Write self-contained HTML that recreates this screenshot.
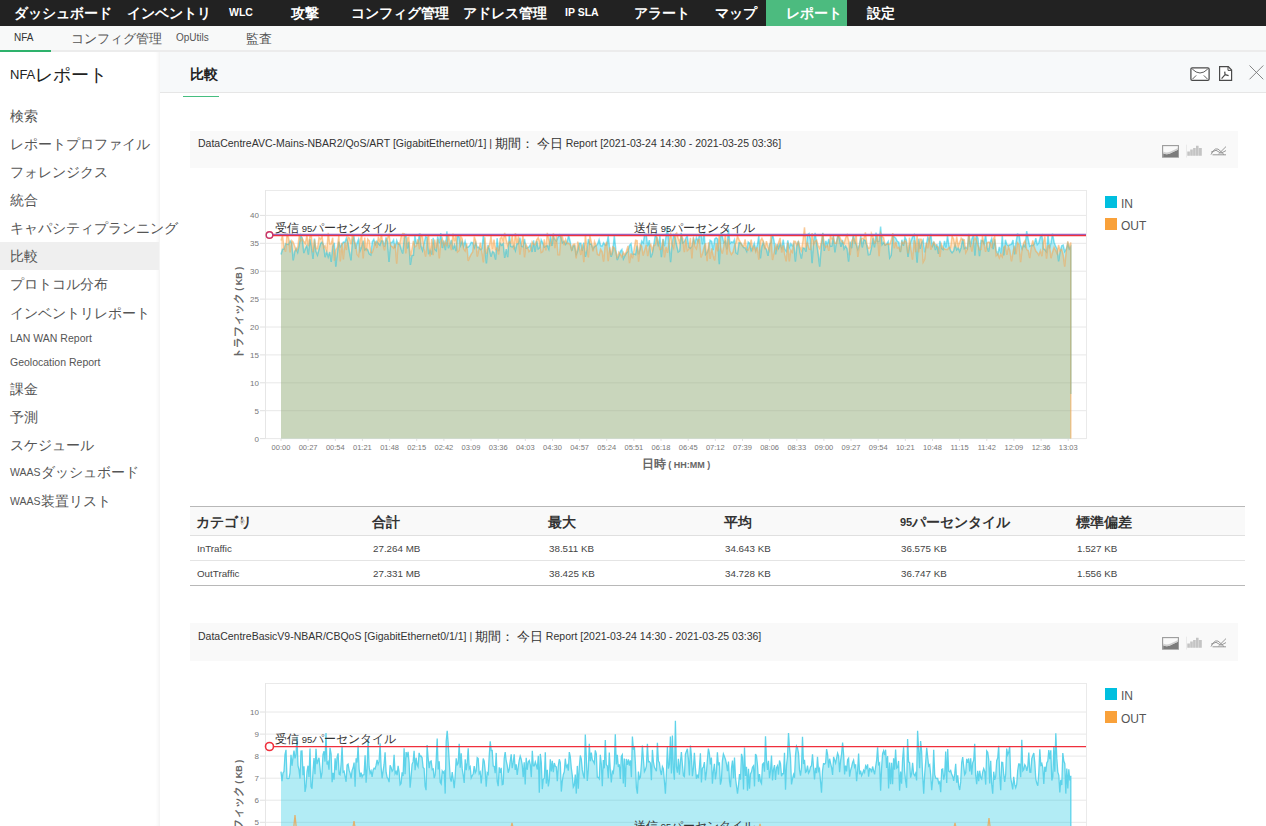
<!DOCTYPE html>
<html lang="ja">
<head>
<meta charset="utf-8">
<style>
*{box-sizing:border-box;margin:0;padding:0}
html,body{width:1266px;height:826px;overflow:hidden;background:#fff;font-family:"Liberation Sans",sans-serif;color:#333}
.abs{position:absolute}
svg text{font-family:"Liberation Sans",sans-serif}
.j{line-height:0;position:relative;top:1px}
.pct .j{font-size:11.6px}
.xt .j{font-size:12px}
.yt .j{font-size:11.2px}
#top{left:0;top:0;width:1266px;height:26px;background:#222}
#top .it{position:absolute;top:-1px;height:26px;line-height:26px;color:#fff;font-size:10.5px;font-weight:bold;white-space:nowrap}
#top .j{font-size:14.1px;top:2px}
#top .act{background:#4cbb7f;top:0;line-height:24px}
#sub{left:0;top:26px;width:1266px;height:26px;background:#f8f9f9;border-bottom:2px solid #ececec}
#sub .it{position:absolute;top:0;height:24px;line-height:24px;font-size:10px;color:#555;white-space:nowrap}
#sub .j{font-size:12.8px;top:2px}
#side{left:0;top:52px;width:160px;height:774px;background:#fff;box-shadow:inset -4px 0 4px -3px #eee}
#side .ttl{position:absolute;left:10px;top:13px;line-height:20px;font-size:13px;color:#222;white-space:nowrap}
#side .ttl .j{font-size:17.9px;top:2px}
#side .it{position:absolute;left:0;width:159px;height:28px;line-height:28px;padding-left:10px;font-size:10.5px;color:#555;white-space:nowrap}
#side .it .j{font-size:14px}
#side .sel{background:#efefef}
#chead{left:160px;top:52px;width:1106px;height:41px;background:#f7f9fa;border-bottom:1px solid #e6e6e6}
#chead .j{font-size:14px}
.ptitle{position:absolute;left:190px;width:1048px;height:37px;background:#f9f9f9;font-size:10.5px;color:#333;white-space:nowrap;padding-left:8px;line-height:20px;padding-top:2px}
.ptitle .j{font-size:13.3px}
.legend{position:absolute;font-size:12px;color:#555}
.legend .sq{position:absolute;left:0;width:12px;height:12px}
.legend .lb{position:absolute;left:16px;white-space:nowrap;line-height:12px}
table.dt{position:absolute;left:190px;top:506px;width:1055px;border-collapse:collapse;table-layout:fixed}
.dt th{height:29px;line-height:14px;text-align:left;font-size:11px;font-weight:bold;color:#333;background:#f9f9f9;padding-left:6px;padding-top:2px;border-top:1px solid #b8b8b8;border-bottom:1px solid #e0e0e0;white-space:nowrap}
.dt th .j{font-size:13.7px}
.dt td{height:25px;line-height:14px;font-size:9.8px;color:#444;padding-left:7px;padding-top:2px;border-bottom:1px solid #e4e4e4;white-space:nowrap}
.dt tr:last-child td{border-bottom:1px solid #b8b8b8}
</style>
</head>
<body>
<div id="top" class="abs">
  <div class="it" style="left:14px"><span class="j">ダッシュボード</span></div>
  <div class="it" style="left:127px"><span class="j">インベントリ</span></div>
  <div class="it" style="left:229px">WLC</div>
  <div class="it" style="left:291px"><span class="j">攻撃</span></div>
  <div class="it" style="left:351px"><span class="j">コンフィグ管理</span></div>
  <div class="it" style="left:463px"><span class="j">アドレス管理</span></div>
  <div class="it" style="left:565px">IP SLA</div>
  <div class="it" style="left:634px"><span class="j">アラート</span></div>
  <div class="it" style="left:715px"><span class="j">マップ</span></div>
  <div class="it act" style="left:766px;width:81px;padding-left:20px"><span class="j">レポート</span></div>
  <div class="it" style="left:867px"><span class="j">設定</span></div>
</div>
<div id="sub" class="abs">
  <div class="it" style="left:14px;color:#333">NFA</div>
  <div style="position:absolute;left:0;top:24px;width:51px;height:2px;background:#2eb26c"></div>
  <div class="it" style="left:71px"><span class="j">コンフィグ管理</span></div>
  <div class="it" style="left:176px">OpUtils</div>
  <div class="it" style="left:246px"><span class="j">監査</span></div>
</div>
<div id="side" class="abs">
  <div class="ttl">NFA<span class="j">レポート</span></div>
  <div class="it" style="top:50px"><span class="j">検索</span></div>
  <div class="it" style="top:78px"><span class="j">レポートプロファイル</span></div>
  <div class="it" style="top:106px"><span class="j">フォレンジクス</span></div>
  <div class="it" style="top:134px"><span class="j">統合</span></div>
  <div class="it" style="top:162px"><span class="j">キャパシティプランニング</span></div>
  <div class="it sel" style="top:190px"><span class="j">比較</span></div>
  <div class="it" style="top:218px"><span class="j">プロトコル分布</span></div>
  <div class="it" style="top:247px"><span class="j">インベントリレポート</span></div>
  <div class="it" style="top:272px">LAN WAN Report</div>
  <div class="it" style="top:296px">Geolocation Report</div>
  <div class="it" style="top:323px"><span class="j">課金</span></div>
  <div class="it" style="top:351px"><span class="j">予測</span></div>
  <div class="it" style="top:379px"><span class="j">スケジュール</span></div>
  <div class="it" style="top:406px">WAAS<span class="j">ダッシュボード</span></div>
  <div class="it" style="top:435px">WAAS<span class="j">装置リスト</span></div>
</div>
<div id="chead" class="abs">
  <div style="position:absolute;left:30px;top:12px;line-height:20px;font-size:12px;font-weight:bold;color:#222"><span class="j">比較</span></div>
</div>
<div class="abs" style="left:183px;top:96px;width:36px;height:1px;background:#46be80"></div>
<!-- header icons -->
<svg class="abs" style="left:1185px;top:60px" width="81" height="26" viewBox="1185 60 81 26">
  <rect x="1190.9" y="67.8" width="18.2" height="12.6" rx="1.3" fill="#fff" stroke="#4a4a4a" stroke-width="1.25"/>
  <path d="M1192.2 69 Q1200 77 1207.8 69" fill="none" stroke="#4a4a4a" stroke-width="0.9"/>
  <path d="M1192.4 79.2 L1196.2 75.4 M1207.6 79.2 L1203.8 75.4" fill="none" stroke="#4a4a4a" stroke-width="0.9"/>
  <path d="M1219.6 66.6 L1228.3 66.6 L1231.6 70.1 L1231.6 80.4 L1219.6 80.4 Z" fill="#fff" stroke="#4a4a4a" stroke-width="1.2"/>
  <path d="M1228 66.6 L1228 70.4 L1231.6 70.4" fill="none" stroke="#4a4a4a" stroke-width="1"/>
  <path d="M1221.6 78.6 L1225.1 74.6 L1224.7 71.6 M1225.1 74.6 L1228.6 75.6" fill="none" stroke="#4a4a4a" stroke-width="1.2"/>
  <path d="M1249.5 65.5 L1263.3 79.3 M1263.3 65.5 L1249.5 79.3" fill="none" stroke="#777" stroke-width="0.9"/>
</svg>

<!-- panel 1 -->
<div class="ptitle" style="top:131px">DataCentreAVC-Mains-NBAR2/QoS/ART [GigabitEthernet0/1] | <span class="j">期間：</span> <span class="j">今日</span> Report [2021-03-24 14:30 - 2021-03-25 03:36]</div>
<svg class="abs" style="left:1160px;top:143px" width="70" height="17" viewBox="1160 143 70 17">
  <rect x="1162.6" y="145.6" width="15.8" height="11.6" fill="#fafafa" stroke="#9a9a9a" stroke-width="1.1"/>
  <path d="M1163.2 156.9 L1163.2 153.2 Q1166.5 155 1170 153.4 Q1174 151.5 1178 149.8 L1178 156.9 Z" fill="#7c7c7c"/>
  <path d="M1163.2 151.6 Q1166.5 153.4 1170 151.8 Q1174 150 1178 148 L1178 149.8 Q1174 151.5 1170 153.4 Q1166.5 155 1163.2 153.2 Z" fill="#cfcfcf"/>
  <line x1="1186.5" y1="144.7" x2="1186.5" y2="157.5" stroke="#e6e6e6" stroke-width="0.8"/>
  <path d="M1187.3 155.8 V151.4 H1189.9 V155.8 Z M1190.2 155.8 V149.4 H1192.8 V155.8 Z M1193.1 155.8 V147.9 H1195.7 V155.8 Z M1196 155.8 V145.8 H1198.6 V155.8 Z M1198.9 155.8 V147.9 H1201.8 V155.8 Z" fill="#c4c4c4"/>
  <path d="M1211 154.6 Q1215.5 145 1220.5 151.2 L1224 154.6 M1218.5 154 L1226 146.6 M1211 152.2 L1216 150.3 L1221 153.2 L1226 150.6 M1212.5 154.8 L1226 154.8" fill="none" stroke="#8c8c8c" stroke-width="0.9"/>
</svg>
<svg width="1266" height="330" viewBox="0 170 1266 330" style="position:absolute;left:0;top:170px">
<line x1="265" y1="438.6" x2="1086" y2="438.6" stroke="#e8e8e8" stroke-width="1"/>
<line x1="260" y1="438.6" x2="265" y2="438.6" stroke="#e0e0e0" stroke-width="1"/>
<text x="259" y="441.6" text-anchor="end" font-size="8" fill="#777">0</text>
<line x1="265" y1="410.7" x2="1086" y2="410.7" stroke="#e8e8e8" stroke-width="1"/>
<line x1="260" y1="410.7" x2="265" y2="410.7" stroke="#e0e0e0" stroke-width="1"/>
<text x="259" y="413.7" text-anchor="end" font-size="8" fill="#777">5</text>
<line x1="265" y1="382.8" x2="1086" y2="382.8" stroke="#e8e8e8" stroke-width="1"/>
<line x1="260" y1="382.8" x2="265" y2="382.8" stroke="#e0e0e0" stroke-width="1"/>
<text x="259" y="385.8" text-anchor="end" font-size="8" fill="#777">10</text>
<line x1="265" y1="354.9" x2="1086" y2="354.9" stroke="#e8e8e8" stroke-width="1"/>
<line x1="260" y1="354.9" x2="265" y2="354.9" stroke="#e0e0e0" stroke-width="1"/>
<text x="259" y="357.9" text-anchor="end" font-size="8" fill="#777">15</text>
<line x1="265" y1="327.0" x2="1086" y2="327.0" stroke="#e8e8e8" stroke-width="1"/>
<line x1="260" y1="327.0" x2="265" y2="327.0" stroke="#e0e0e0" stroke-width="1"/>
<text x="259" y="330.0" text-anchor="end" font-size="8" fill="#777">20</text>
<line x1="265" y1="299.1" x2="1086" y2="299.1" stroke="#e8e8e8" stroke-width="1"/>
<line x1="260" y1="299.1" x2="265" y2="299.1" stroke="#e0e0e0" stroke-width="1"/>
<text x="259" y="302.1" text-anchor="end" font-size="8" fill="#777">25</text>
<line x1="265" y1="271.2" x2="1086" y2="271.2" stroke="#e8e8e8" stroke-width="1"/>
<line x1="260" y1="271.2" x2="265" y2="271.2" stroke="#e0e0e0" stroke-width="1"/>
<text x="259" y="274.2" text-anchor="end" font-size="8" fill="#777">30</text>
<line x1="265" y1="243.3" x2="1086" y2="243.3" stroke="#e8e8e8" stroke-width="1"/>
<line x1="260" y1="243.3" x2="265" y2="243.3" stroke="#e0e0e0" stroke-width="1"/>
<text x="259" y="246.3" text-anchor="end" font-size="8" fill="#777">35</text>
<line x1="265" y1="215.4" x2="1086" y2="215.4" stroke="#e8e8e8" stroke-width="1"/>
<line x1="260" y1="215.4" x2="265" y2="215.4" stroke="#e0e0e0" stroke-width="1"/>
<text x="259" y="218.4" text-anchor="end" font-size="8" fill="#777">40</text>
<line x1="265" y1="190.5" x2="1086" y2="190.5" stroke="#eaeaea"/>
<line x1="265.5" y1="190" x2="265.5" y2="439" stroke="#e6e6e6"/>
<line x1="1086.5" y1="190" x2="1086.5" y2="439" stroke="#eaeaea"/>
<polygon points="281.0,438.6 281.0,254.5 282.5,249.2 284.0,249.1 285.6,243.7 287.1,244.3 288.6,244.5 290.1,240.8 291.7,243.0 293.2,260.4 294.7,251.7 296.2,248.4 297.7,252.3 299.3,244.5 300.8,235.3 302.3,238.6 303.8,253.1 305.3,248.7 306.9,245.6 308.4,254.6 309.9,239.1 311.4,246.7 313.0,258.9 314.5,238.5 316.0,251.6 317.5,255.1 319.0,249.2 320.6,243.6 322.1,242.1 323.6,245.3 325.1,257.2 326.7,251.7 328.2,256.8 329.7,252.0 331.2,262.0 332.7,246.5 334.3,242.9 335.8,266.7 337.3,253.4 338.8,241.7 340.3,246.8 341.9,244.5 343.4,242.1 344.9,242.2 346.4,238.0 348.0,242.8 349.5,252.5 351.0,260.4 352.5,240.0 354.0,236.6 355.6,248.9 357.1,242.8 358.6,239.1 360.1,250.8 361.7,246.8 363.2,240.7 364.7,249.8 366.2,248.5 367.7,249.7 369.3,254.0 370.8,254.9 372.3,241.7 373.8,239.3 375.3,244.4 376.9,241.2 378.4,243.5 379.9,245.2 381.4,240.7 383.0,241.2 384.5,246.7 386.0,237.4 387.5,241.7 389.0,261.9 390.6,242.5 392.1,242.4 393.6,239.8 395.1,248.2 396.7,240.3 398.2,244.2 399.7,244.2 401.2,249.3 402.7,253.6 404.3,238.3 405.8,233.9 407.3,248.5 408.8,241.7 410.4,265.0 411.9,255.4 413.4,255.3 414.9,235.8 416.4,243.3 418.0,243.2 419.5,233.3 421.0,246.0 422.5,250.5 424.0,243.7 425.6,236.8 427.1,237.4 428.6,254.2 430.1,250.0 431.7,254.5 433.2,237.8 434.7,249.2 436.2,250.8 437.7,236.3 439.3,243.1 440.8,233.2 442.3,248.0 443.8,240.5 445.4,250.1 446.9,231.3 448.4,248.3 449.9,244.4 451.4,239.9 453.0,249.5 454.5,245.0 456.0,251.1 457.5,236.0 459.0,236.6 460.6,245.4 462.1,241.1 463.6,246.3 465.1,241.2 466.7,247.6 468.2,247.0 469.7,245.5 471.2,242.3 472.7,242.7 474.3,247.6 475.8,242.7 477.3,247.5 478.8,247.2 480.4,249.5 481.9,248.7 483.4,234.5 484.9,248.1 486.4,263.5 488.0,244.9 489.5,249.4 491.0,256.7 492.5,251.5 494.0,252.7 495.6,259.6 497.1,238.2 498.6,251.1 500.1,243.2 501.7,245.3 503.2,243.5 504.7,258.0 506.2,249.1 507.7,257.2 509.3,234.2 510.8,246.5 512.3,247.0 513.8,245.2 515.4,250.5 516.9,243.9 518.4,243.6 519.9,237.6 521.4,246.1 523.0,246.8 524.5,238.9 526.0,248.1 527.5,247.9 529.0,247.0 530.6,244.3 532.1,252.0 533.6,240.3 535.1,251.9 536.7,240.8 538.2,248.8 539.7,247.5 541.2,239.7 542.7,242.7 544.3,247.1 545.8,246.2 547.3,245.5 548.8,249.1 550.4,235.9 551.9,245.9 553.4,236.5 554.9,239.6 556.4,241.2 558.0,237.2 559.5,234.9 561.0,237.6 562.5,242.6 564.0,241.2 565.6,244.4 567.1,242.0 568.6,235.5 570.1,241.2 571.7,250.7 573.2,246.0 574.7,245.7 576.2,254.4 577.7,250.7 579.3,243.3 580.8,243.2 582.3,250.9 583.8,242.6 585.4,256.9 586.9,250.1 588.4,239.0 589.9,244.4 591.4,244.1 593.0,248.9 594.5,246.5 596.0,245.8 597.5,244.3 599.1,239.6 600.6,245.8 602.1,245.9 603.6,242.8 605.1,244.9 606.7,244.7 608.2,236.0 609.7,248.9 611.2,256.9 612.7,251.7 614.3,235.9 615.8,249.4 617.3,260.1 618.8,256.1 620.4,251.2 621.9,249.5 623.4,258.8 624.9,255.6 626.4,253.1 628.0,251.4 629.5,245.4 631.0,243.7 632.5,253.9 634.1,253.9 635.6,254.6 637.1,245.5 638.6,254.4 640.1,249.1 641.7,241.0 643.2,243.0 644.7,234.3 646.2,234.3 647.7,246.3 649.3,240.1 650.8,257.5 652.3,253.9 653.8,244.6 655.4,234.6 656.9,238.0 658.4,246.4 659.9,236.0 661.4,257.3 663.0,238.8 664.5,246.2 666.0,236.5 667.5,227.2 669.1,244.7 670.6,262.1 672.1,243.7 673.6,235.3 675.1,237.8 676.7,245.6 678.2,252.0 679.7,250.9 681.2,232.8 682.7,242.7 684.3,241.8 685.8,238.2 687.3,236.0 688.8,247.1 690.4,248.3 691.9,246.4 693.4,238.4 694.9,242.9 696.4,237.6 698.0,241.4 699.5,234.6 701.0,233.9 702.5,244.3 704.1,232.3 705.6,254.4 707.1,252.6 708.6,248.4 710.1,240.3 711.7,241.4 713.2,250.2 714.7,239.1 716.2,237.8 717.7,239.1 719.3,264.2 720.8,234.0 722.3,236.2 723.8,242.7 725.4,241.0 726.9,249.4 728.4,228.9 729.9,243.7 731.4,241.9 733.0,242.5 734.5,239.6 736.0,252.9 737.5,254.0 739.1,242.7 740.6,243.0 742.1,244.9 743.6,247.5 745.1,247.9 746.7,251.2 748.2,241.9 749.7,243.3 751.2,250.6 752.7,247.6 754.3,243.2 755.8,249.9 757.3,245.1 758.8,235.8 760.4,258.4 761.9,246.2 763.4,242.4 764.9,247.6 766.4,249.3 768.0,255.8 769.5,244.3 771.0,242.5 772.5,234.1 774.1,241.2 775.6,254.4 777.1,244.0 778.6,248.2 780.1,243.7 781.7,247.8 783.2,239.7 784.7,249.0 786.2,251.3 787.8,240.4 789.3,247.6 790.8,243.6 792.3,246.0 793.8,243.9 795.4,261.7 796.9,245.4 798.4,241.1 799.9,252.1 801.4,258.7 803.0,247.9 804.5,248.3 806.0,251.7 807.5,234.6 809.1,233.5 810.6,239.6 812.1,263.1 813.6,241.6 815.1,232.9 816.7,243.6 818.2,254.2 819.7,266.7 821.2,247.7 822.8,232.8 824.3,251.0 825.8,240.8 827.3,245.0 828.8,239.0 830.4,246.4 831.9,246.1 833.4,235.3 834.9,252.5 836.4,242.4 838.0,234.4 839.5,239.4 841.0,246.8 842.5,239.8 844.1,248.9 845.6,246.0 847.1,248.8 848.6,261.7 850.1,241.6 851.7,248.2 853.2,234.2 854.7,240.7 856.2,244.6 857.8,249.3 859.3,244.7 860.8,236.0 862.3,247.5 863.8,239.7 865.4,240.6 866.9,245.9 868.4,254.9 869.9,254.5 871.4,248.0 873.0,238.1 874.5,247.3 876.0,232.7 877.5,241.6 879.1,241.6 880.6,226.5 882.1,244.6 883.6,242.4 885.1,245.1 886.7,244.0 888.2,241.6 889.7,257.8 891.2,255.3 892.8,236.0 894.3,236.9 895.8,238.2 897.3,241.3 898.8,242.3 900.4,252.2 901.9,239.8 903.4,245.9 904.9,237.1 906.4,239.9 908.0,257.0 909.5,245.4 911.0,241.0 912.5,236.9 914.1,234.6 915.6,243.8 917.1,262.6 918.6,238.7 920.1,248.7 921.7,242.6 923.2,240.1 924.7,252.4 926.2,245.2 927.8,237.1 929.3,240.7 930.8,233.8 932.3,247.2 933.8,241.6 935.4,250.1 936.9,244.1 938.4,253.8 939.9,240.8 941.4,248.1 943.0,249.6 944.5,240.8 946.0,247.5 947.5,235.9 949.1,246.1 950.6,250.7 952.1,252.7 953.6,250.9 955.1,244.4 956.7,249.8 958.2,247.9 959.7,251.6 961.2,247.2 962.8,238.6 964.3,248.5 965.8,247.3 967.3,248.6 968.8,234.0 970.4,247.0 971.9,238.8 973.4,235.3 974.9,255.8 976.5,235.1 978.0,238.5 979.5,256.3 981.0,240.4 982.5,240.6 984.1,243.6 985.6,234.4 987.1,247.2 988.6,251.7 990.1,242.5 991.7,238.5 993.2,249.2 994.7,239.3 996.2,250.8 997.8,254.0 999.3,246.9 1000.8,253.7 1002.3,235.6 1003.8,255.5 1005.4,239.8 1006.9,244.6 1008.4,245.9 1009.9,244.8 1011.5,244.3 1013.0,240.1 1014.5,254.4 1016.0,242.3 1017.5,234.1 1019.1,234.8 1020.6,244.8 1022.1,248.8 1023.6,244.8 1025.1,246.8 1026.7,231.1 1028.2,239.1 1029.7,246.3 1031.2,245.3 1032.8,245.6 1034.3,243.9 1035.8,238.2 1037.3,244.6 1038.8,243.0 1040.4,236.7 1041.9,235.1 1043.4,248.7 1044.9,249.7 1046.5,251.8 1048.0,234.5 1049.5,248.4 1051.0,242.9 1052.5,233.7 1054.1,242.2 1055.6,246.2 1057.1,248.9 1058.6,261.3 1060.1,251.7 1061.7,245.8 1063.2,245.0 1064.7,251.6 1066.2,249.1 1067.8,243.6 1069.3,248.8 1070.8,246.7 1070.8,438.6" fill="rgba(0,191,223,0.3)"/>
<polygon points="281.0,438.6 281.0,240.5 282.5,235.4 284.0,247.9 285.6,251.7 287.1,233.4 288.6,238.2 290.1,252.5 291.7,240.6 293.2,242.2 294.7,246.3 296.2,250.5 297.7,247.8 299.3,235.1 300.8,240.9 302.3,238.4 303.8,241.5 305.3,243.5 306.9,235.6 308.4,246.1 309.9,236.6 311.4,236.6 313.0,252.4 314.5,239.5 316.0,248.5 317.5,248.6 319.0,237.5 320.6,239.0 322.1,236.5 323.6,247.7 325.1,245.6 326.7,251.5 328.2,232.8 329.7,243.9 331.2,243.7 332.7,237.7 334.3,260.7 335.8,249.8 337.3,247.5 338.8,235.8 340.3,261.5 341.9,242.8 343.4,259.4 344.9,242.4 346.4,250.0 348.0,237.2 349.5,238.1 351.0,244.2 352.5,234.0 354.0,241.3 355.6,244.1 357.1,254.5 358.6,256.4 360.1,240.5 361.7,235.2 363.2,258.5 364.7,237.6 366.2,251.2 367.7,239.0 369.3,240.8 370.8,252.4 372.3,252.7 373.8,247.5 375.3,241.0 376.9,248.0 378.4,236.6 379.9,242.4 381.4,234.1 383.0,244.7 384.5,250.4 386.0,240.4 387.5,238.2 389.0,234.5 390.6,245.5 392.1,246.6 393.6,248.1 395.1,243.7 396.7,263.6 398.2,242.8 399.7,243.6 401.2,236.3 402.7,233.6 404.3,233.7 405.8,253.4 407.3,238.0 408.8,237.3 410.4,256.1 411.9,249.5 413.4,240.9 414.9,246.9 416.4,245.9 418.0,239.3 419.5,249.1 421.0,234.9 422.5,237.1 424.0,248.7 425.6,256.7 427.1,241.3 428.6,234.2 430.1,256.5 431.7,239.1 433.2,255.2 434.7,239.5 436.2,248.4 437.7,239.0 439.3,258.5 440.8,241.5 442.3,238.5 443.8,246.0 445.4,241.5 446.9,246.3 448.4,234.4 449.9,243.4 451.4,250.1 453.0,233.6 454.5,241.3 456.0,236.0 457.5,252.0 459.0,250.6 460.6,236.4 462.1,238.3 463.6,248.7 465.1,250.9 466.7,243.5 468.2,260.9 469.7,257.1 471.2,254.1 472.7,252.0 474.3,236.7 475.8,241.2 477.3,256.6 478.8,249.7 480.4,242.7 481.9,252.0 483.4,262.4 484.9,237.3 486.4,253.8 488.0,247.3 489.5,245.4 491.0,236.1 492.5,249.2 494.0,239.6 495.6,249.3 497.1,248.0 498.6,254.5 500.1,238.7 501.7,237.0 503.2,240.8 504.7,233.0 506.2,239.7 507.7,245.6 509.3,241.7 510.8,242.8 512.3,235.3 513.8,249.5 515.4,233.1 516.9,243.1 518.4,236.3 519.9,254.7 521.4,244.2 523.0,235.5 524.5,257.3 526.0,244.5 527.5,247.2 529.0,251.6 530.6,250.0 532.1,241.9 533.6,244.1 535.1,244.8 536.7,239.8 538.2,237.6 539.7,241.8 541.2,252.4 542.7,251.5 544.3,239.4 545.8,250.4 547.3,232.8 548.8,239.8 550.4,246.2 551.9,239.1 553.4,233.4 554.9,248.1 556.4,236.2 558.0,254.7 559.5,254.7 561.0,236.0 562.5,236.9 564.0,245.2 565.6,239.4 567.1,243.5 568.6,243.3 570.1,244.5 571.7,249.8 573.2,244.4 574.7,244.0 576.2,258.5 577.7,241.6 579.3,247.3 580.8,255.0 582.3,244.4 583.8,262.1 585.4,234.9 586.9,248.5 588.4,257.4 589.9,235.8 591.4,242.3 593.0,251.4 594.5,241.6 596.0,245.3 597.5,254.5 599.1,255.2 600.6,249.2 602.1,251.5 603.6,261.7 605.1,245.6 606.7,241.9 608.2,261.1 609.7,247.4 611.2,255.4 612.7,246.8 614.3,247.9 615.8,251.9 617.3,258.4 618.8,252.2 620.4,254.3 621.9,256.9 623.4,252.3 624.9,255.0 626.4,251.2 628.0,245.9 629.5,263.2 631.0,253.4 632.5,258.4 634.1,249.5 635.6,240.3 637.1,240.7 638.6,261.7 640.1,244.5 641.7,246.3 643.2,255.6 644.7,249.9 646.2,244.8 647.7,256.1 649.3,246.9 650.8,244.4 652.3,250.4 653.8,245.2 655.4,244.9 656.9,236.6 658.4,243.0 659.9,249.5 661.4,248.9 663.0,239.4 664.5,257.5 666.0,246.8 667.5,252.8 669.1,242.0 670.6,232.7 672.1,244.2 673.6,247.8 675.1,234.6 676.7,233.0 678.2,238.4 679.7,242.3 681.2,235.4 682.7,238.3 684.3,252.2 685.8,239.1 687.3,250.6 688.8,249.2 690.4,237.8 691.9,258.4 693.4,237.3 694.9,246.5 696.4,248.8 698.0,239.8 699.5,239.4 701.0,257.4 702.5,253.4 704.1,247.1 705.6,243.4 707.1,261.1 708.6,242.3 710.1,258.9 711.7,248.4 713.2,255.7 714.7,260.5 716.2,243.4 717.7,251.3 719.3,235.1 720.8,248.3 722.3,253.6 723.8,246.2 725.4,235.1 726.9,254.7 728.4,238.9 729.9,251.0 731.4,254.4 733.0,252.1 734.5,245.7 736.0,242.5 737.5,236.2 739.1,239.8 740.6,242.5 742.1,245.5 743.6,246.7 745.1,239.4 746.7,249.8 748.2,250.0 749.7,246.4 751.2,239.6 752.7,250.0 754.3,246.6 755.8,251.8 757.3,247.3 758.8,259.6 760.4,240.8 761.9,238.4 763.4,241.6 764.9,249.3 766.4,241.2 768.0,247.0 769.5,250.3 771.0,235.2 772.5,260.0 774.1,252.6 775.6,245.2 777.1,249.3 778.6,242.5 780.1,237.9 781.7,252.5 783.2,245.4 784.7,254.4 786.2,261.4 787.8,242.9 789.3,261.5 790.8,250.1 792.3,252.3 793.8,241.2 795.4,241.5 796.9,245.1 798.4,241.6 799.9,246.7 801.4,250.4 803.0,240.5 804.5,227.4 806.0,246.3 807.5,243.1 809.1,249.1 810.6,249.4 812.1,233.0 813.6,244.0 815.1,241.1 816.7,240.2 818.2,245.9 819.7,248.4 821.2,242.4 822.8,233.4 824.3,245.1 825.8,247.3 827.3,245.4 828.8,250.9 830.4,236.1 831.9,238.9 833.4,237.6 834.9,243.3 836.4,243.3 838.0,235.9 839.5,236.3 841.0,240.0 842.5,242.0 844.1,243.5 845.6,237.9 847.1,234.9 848.6,240.5 850.1,255.2 851.7,241.1 853.2,238.0 854.7,243.7 856.2,234.1 857.8,256.9 859.3,247.0 860.8,238.9 862.3,238.3 863.8,239.0 865.4,232.3 866.9,244.4 868.4,248.3 869.9,247.7 871.4,233.4 873.0,236.8 874.5,242.9 876.0,241.1 877.5,235.5 879.1,256.2 880.6,233.2 882.1,236.2 883.6,237.7 885.1,245.0 886.7,244.3 888.2,244.1 889.7,244.5 891.2,240.3 892.8,233.1 894.3,248.3 895.8,241.8 897.3,247.9 898.8,247.2 900.4,251.7 901.9,242.1 903.4,243.7 904.9,240.5 906.4,242.3 908.0,253.5 909.5,237.6 911.0,249.5 912.5,259.6 914.1,240.2 915.6,252.1 917.1,235.4 918.6,252.3 920.1,239.2 921.7,239.4 923.2,262.0 924.7,259.2 926.2,242.6 927.8,248.4 929.3,236.5 930.8,249.7 932.3,245.4 933.8,242.1 935.4,244.8 936.9,246.5 938.4,247.3 939.9,257.0 941.4,244.2 943.0,247.8 944.5,249.0 946.0,249.6 947.5,249.5 949.1,247.4 950.6,247.6 952.1,236.3 953.6,238.8 955.1,247.0 956.7,236.7 958.2,246.1 959.7,242.3 961.2,238.1 962.8,240.1 964.3,239.8 965.8,252.6 967.3,249.6 968.8,233.9 970.4,243.4 971.9,251.6 973.4,241.4 974.9,237.6 976.5,240.4 978.0,245.6 979.5,249.9 981.0,249.4 982.5,236.1 984.1,244.4 985.6,251.8 987.1,242.8 988.6,242.1 990.1,242.8 991.7,248.0 993.2,239.3 994.7,236.6 996.2,255.7 997.8,253.8 999.3,257.9 1000.8,254.1 1002.3,256.8 1003.8,247.3 1005.4,245.8 1006.9,254.8 1008.4,246.7 1009.9,250.8 1011.5,261.5 1013.0,252.0 1014.5,245.8 1016.0,254.1 1017.5,242.8 1019.1,244.7 1020.6,262.2 1022.1,249.0 1023.6,243.0 1025.1,240.5 1026.7,249.6 1028.2,250.5 1029.7,258.2 1031.2,247.4 1032.8,240.3 1034.3,247.0 1035.8,251.1 1037.3,252.6 1038.8,255.1 1040.4,250.5 1041.9,256.2 1043.4,242.4 1044.9,236.5 1046.5,258.7 1048.0,245.9 1049.5,245.1 1051.0,258.2 1052.5,252.3 1054.1,247.3 1055.6,250.3 1057.1,253.7 1058.6,245.0 1060.1,250.9 1061.7,249.5 1063.2,255.1 1064.7,266.7 1066.2,251.5 1067.8,241.3 1069.3,247.6 1070.8,242.5 1070.8,438.6" fill="rgba(255,163,57,0.3)"/>
<polyline points="281.0,254.5 282.5,249.2 284.0,249.1 285.6,243.7 287.1,244.3 288.6,244.5 290.1,240.8 291.7,243.0 293.2,260.4 294.7,251.7 296.2,248.4 297.7,252.3 299.3,244.5 300.8,235.3 302.3,238.6 303.8,253.1 305.3,248.7 306.9,245.6 308.4,254.6 309.9,239.1 311.4,246.7 313.0,258.9 314.5,238.5 316.0,251.6 317.5,255.1 319.0,249.2 320.6,243.6 322.1,242.1 323.6,245.3 325.1,257.2 326.7,251.7 328.2,256.8 329.7,252.0 331.2,262.0 332.7,246.5 334.3,242.9 335.8,266.7 337.3,253.4 338.8,241.7 340.3,246.8 341.9,244.5 343.4,242.1 344.9,242.2 346.4,238.0 348.0,242.8 349.5,252.5 351.0,260.4 352.5,240.0 354.0,236.6 355.6,248.9 357.1,242.8 358.6,239.1 360.1,250.8 361.7,246.8 363.2,240.7 364.7,249.8 366.2,248.5 367.7,249.7 369.3,254.0 370.8,254.9 372.3,241.7 373.8,239.3 375.3,244.4 376.9,241.2 378.4,243.5 379.9,245.2 381.4,240.7 383.0,241.2 384.5,246.7 386.0,237.4 387.5,241.7 389.0,261.9 390.6,242.5 392.1,242.4 393.6,239.8 395.1,248.2 396.7,240.3 398.2,244.2 399.7,244.2 401.2,249.3 402.7,253.6 404.3,238.3 405.8,233.9 407.3,248.5 408.8,241.7 410.4,265.0 411.9,255.4 413.4,255.3 414.9,235.8 416.4,243.3 418.0,243.2 419.5,233.3 421.0,246.0 422.5,250.5 424.0,243.7 425.6,236.8 427.1,237.4 428.6,254.2 430.1,250.0 431.7,254.5 433.2,237.8 434.7,249.2 436.2,250.8 437.7,236.3 439.3,243.1 440.8,233.2 442.3,248.0 443.8,240.5 445.4,250.1 446.9,231.3 448.4,248.3 449.9,244.4 451.4,239.9 453.0,249.5 454.5,245.0 456.0,251.1 457.5,236.0 459.0,236.6 460.6,245.4 462.1,241.1 463.6,246.3 465.1,241.2 466.7,247.6 468.2,247.0 469.7,245.5 471.2,242.3 472.7,242.7 474.3,247.6 475.8,242.7 477.3,247.5 478.8,247.2 480.4,249.5 481.9,248.7 483.4,234.5 484.9,248.1 486.4,263.5 488.0,244.9 489.5,249.4 491.0,256.7 492.5,251.5 494.0,252.7 495.6,259.6 497.1,238.2 498.6,251.1 500.1,243.2 501.7,245.3 503.2,243.5 504.7,258.0 506.2,249.1 507.7,257.2 509.3,234.2 510.8,246.5 512.3,247.0 513.8,245.2 515.4,250.5 516.9,243.9 518.4,243.6 519.9,237.6 521.4,246.1 523.0,246.8 524.5,238.9 526.0,248.1 527.5,247.9 529.0,247.0 530.6,244.3 532.1,252.0 533.6,240.3 535.1,251.9 536.7,240.8 538.2,248.8 539.7,247.5 541.2,239.7 542.7,242.7 544.3,247.1 545.8,246.2 547.3,245.5 548.8,249.1 550.4,235.9 551.9,245.9 553.4,236.5 554.9,239.6 556.4,241.2 558.0,237.2 559.5,234.9 561.0,237.6 562.5,242.6 564.0,241.2 565.6,244.4 567.1,242.0 568.6,235.5 570.1,241.2 571.7,250.7 573.2,246.0 574.7,245.7 576.2,254.4 577.7,250.7 579.3,243.3 580.8,243.2 582.3,250.9 583.8,242.6 585.4,256.9 586.9,250.1 588.4,239.0 589.9,244.4 591.4,244.1 593.0,248.9 594.5,246.5 596.0,245.8 597.5,244.3 599.1,239.6 600.6,245.8 602.1,245.9 603.6,242.8 605.1,244.9 606.7,244.7 608.2,236.0 609.7,248.9 611.2,256.9 612.7,251.7 614.3,235.9 615.8,249.4 617.3,260.1 618.8,256.1 620.4,251.2 621.9,249.5 623.4,258.8 624.9,255.6 626.4,253.1 628.0,251.4 629.5,245.4 631.0,243.7 632.5,253.9 634.1,253.9 635.6,254.6 637.1,245.5 638.6,254.4 640.1,249.1 641.7,241.0 643.2,243.0 644.7,234.3 646.2,234.3 647.7,246.3 649.3,240.1 650.8,257.5 652.3,253.9 653.8,244.6 655.4,234.6 656.9,238.0 658.4,246.4 659.9,236.0 661.4,257.3 663.0,238.8 664.5,246.2 666.0,236.5 667.5,227.2 669.1,244.7 670.6,262.1 672.1,243.7 673.6,235.3 675.1,237.8 676.7,245.6 678.2,252.0 679.7,250.9 681.2,232.8 682.7,242.7 684.3,241.8 685.8,238.2 687.3,236.0 688.8,247.1 690.4,248.3 691.9,246.4 693.4,238.4 694.9,242.9 696.4,237.6 698.0,241.4 699.5,234.6 701.0,233.9 702.5,244.3 704.1,232.3 705.6,254.4 707.1,252.6 708.6,248.4 710.1,240.3 711.7,241.4 713.2,250.2 714.7,239.1 716.2,237.8 717.7,239.1 719.3,264.2 720.8,234.0 722.3,236.2 723.8,242.7 725.4,241.0 726.9,249.4 728.4,228.9 729.9,243.7 731.4,241.9 733.0,242.5 734.5,239.6 736.0,252.9 737.5,254.0 739.1,242.7 740.6,243.0 742.1,244.9 743.6,247.5 745.1,247.9 746.7,251.2 748.2,241.9 749.7,243.3 751.2,250.6 752.7,247.6 754.3,243.2 755.8,249.9 757.3,245.1 758.8,235.8 760.4,258.4 761.9,246.2 763.4,242.4 764.9,247.6 766.4,249.3 768.0,255.8 769.5,244.3 771.0,242.5 772.5,234.1 774.1,241.2 775.6,254.4 777.1,244.0 778.6,248.2 780.1,243.7 781.7,247.8 783.2,239.7 784.7,249.0 786.2,251.3 787.8,240.4 789.3,247.6 790.8,243.6 792.3,246.0 793.8,243.9 795.4,261.7 796.9,245.4 798.4,241.1 799.9,252.1 801.4,258.7 803.0,247.9 804.5,248.3 806.0,251.7 807.5,234.6 809.1,233.5 810.6,239.6 812.1,263.1 813.6,241.6 815.1,232.9 816.7,243.6 818.2,254.2 819.7,266.7 821.2,247.7 822.8,232.8 824.3,251.0 825.8,240.8 827.3,245.0 828.8,239.0 830.4,246.4 831.9,246.1 833.4,235.3 834.9,252.5 836.4,242.4 838.0,234.4 839.5,239.4 841.0,246.8 842.5,239.8 844.1,248.9 845.6,246.0 847.1,248.8 848.6,261.7 850.1,241.6 851.7,248.2 853.2,234.2 854.7,240.7 856.2,244.6 857.8,249.3 859.3,244.7 860.8,236.0 862.3,247.5 863.8,239.7 865.4,240.6 866.9,245.9 868.4,254.9 869.9,254.5 871.4,248.0 873.0,238.1 874.5,247.3 876.0,232.7 877.5,241.6 879.1,241.6 880.6,226.5 882.1,244.6 883.6,242.4 885.1,245.1 886.7,244.0 888.2,241.6 889.7,257.8 891.2,255.3 892.8,236.0 894.3,236.9 895.8,238.2 897.3,241.3 898.8,242.3 900.4,252.2 901.9,239.8 903.4,245.9 904.9,237.1 906.4,239.9 908.0,257.0 909.5,245.4 911.0,241.0 912.5,236.9 914.1,234.6 915.6,243.8 917.1,262.6 918.6,238.7 920.1,248.7 921.7,242.6 923.2,240.1 924.7,252.4 926.2,245.2 927.8,237.1 929.3,240.7 930.8,233.8 932.3,247.2 933.8,241.6 935.4,250.1 936.9,244.1 938.4,253.8 939.9,240.8 941.4,248.1 943.0,249.6 944.5,240.8 946.0,247.5 947.5,235.9 949.1,246.1 950.6,250.7 952.1,252.7 953.6,250.9 955.1,244.4 956.7,249.8 958.2,247.9 959.7,251.6 961.2,247.2 962.8,238.6 964.3,248.5 965.8,247.3 967.3,248.6 968.8,234.0 970.4,247.0 971.9,238.8 973.4,235.3 974.9,255.8 976.5,235.1 978.0,238.5 979.5,256.3 981.0,240.4 982.5,240.6 984.1,243.6 985.6,234.4 987.1,247.2 988.6,251.7 990.1,242.5 991.7,238.5 993.2,249.2 994.7,239.3 996.2,250.8 997.8,254.0 999.3,246.9 1000.8,253.7 1002.3,235.6 1003.8,255.5 1005.4,239.8 1006.9,244.6 1008.4,245.9 1009.9,244.8 1011.5,244.3 1013.0,240.1 1014.5,254.4 1016.0,242.3 1017.5,234.1 1019.1,234.8 1020.6,244.8 1022.1,248.8 1023.6,244.8 1025.1,246.8 1026.7,231.1 1028.2,239.1 1029.7,246.3 1031.2,245.3 1032.8,245.6 1034.3,243.9 1035.8,238.2 1037.3,244.6 1038.8,243.0 1040.4,236.7 1041.9,235.1 1043.4,248.7 1044.9,249.7 1046.5,251.8 1048.0,234.5 1049.5,248.4 1051.0,242.9 1052.5,233.7 1054.1,242.2 1055.6,246.2 1057.1,248.9 1058.6,261.3 1060.1,251.7 1061.7,245.8 1063.2,245.0 1064.7,251.6 1066.2,249.1 1067.8,243.6 1069.3,248.8 1070.8,246.7 1070.8,394.0" fill="none" stroke="rgba(0,191,223,0.45)" stroke-width="1.5"/>
<polyline points="281.0,240.5 282.5,235.4 284.0,247.9 285.6,251.7 287.1,233.4 288.6,238.2 290.1,252.5 291.7,240.6 293.2,242.2 294.7,246.3 296.2,250.5 297.7,247.8 299.3,235.1 300.8,240.9 302.3,238.4 303.8,241.5 305.3,243.5 306.9,235.6 308.4,246.1 309.9,236.6 311.4,236.6 313.0,252.4 314.5,239.5 316.0,248.5 317.5,248.6 319.0,237.5 320.6,239.0 322.1,236.5 323.6,247.7 325.1,245.6 326.7,251.5 328.2,232.8 329.7,243.9 331.2,243.7 332.7,237.7 334.3,260.7 335.8,249.8 337.3,247.5 338.8,235.8 340.3,261.5 341.9,242.8 343.4,259.4 344.9,242.4 346.4,250.0 348.0,237.2 349.5,238.1 351.0,244.2 352.5,234.0 354.0,241.3 355.6,244.1 357.1,254.5 358.6,256.4 360.1,240.5 361.7,235.2 363.2,258.5 364.7,237.6 366.2,251.2 367.7,239.0 369.3,240.8 370.8,252.4 372.3,252.7 373.8,247.5 375.3,241.0 376.9,248.0 378.4,236.6 379.9,242.4 381.4,234.1 383.0,244.7 384.5,250.4 386.0,240.4 387.5,238.2 389.0,234.5 390.6,245.5 392.1,246.6 393.6,248.1 395.1,243.7 396.7,263.6 398.2,242.8 399.7,243.6 401.2,236.3 402.7,233.6 404.3,233.7 405.8,253.4 407.3,238.0 408.8,237.3 410.4,256.1 411.9,249.5 413.4,240.9 414.9,246.9 416.4,245.9 418.0,239.3 419.5,249.1 421.0,234.9 422.5,237.1 424.0,248.7 425.6,256.7 427.1,241.3 428.6,234.2 430.1,256.5 431.7,239.1 433.2,255.2 434.7,239.5 436.2,248.4 437.7,239.0 439.3,258.5 440.8,241.5 442.3,238.5 443.8,246.0 445.4,241.5 446.9,246.3 448.4,234.4 449.9,243.4 451.4,250.1 453.0,233.6 454.5,241.3 456.0,236.0 457.5,252.0 459.0,250.6 460.6,236.4 462.1,238.3 463.6,248.7 465.1,250.9 466.7,243.5 468.2,260.9 469.7,257.1 471.2,254.1 472.7,252.0 474.3,236.7 475.8,241.2 477.3,256.6 478.8,249.7 480.4,242.7 481.9,252.0 483.4,262.4 484.9,237.3 486.4,253.8 488.0,247.3 489.5,245.4 491.0,236.1 492.5,249.2 494.0,239.6 495.6,249.3 497.1,248.0 498.6,254.5 500.1,238.7 501.7,237.0 503.2,240.8 504.7,233.0 506.2,239.7 507.7,245.6 509.3,241.7 510.8,242.8 512.3,235.3 513.8,249.5 515.4,233.1 516.9,243.1 518.4,236.3 519.9,254.7 521.4,244.2 523.0,235.5 524.5,257.3 526.0,244.5 527.5,247.2 529.0,251.6 530.6,250.0 532.1,241.9 533.6,244.1 535.1,244.8 536.7,239.8 538.2,237.6 539.7,241.8 541.2,252.4 542.7,251.5 544.3,239.4 545.8,250.4 547.3,232.8 548.8,239.8 550.4,246.2 551.9,239.1 553.4,233.4 554.9,248.1 556.4,236.2 558.0,254.7 559.5,254.7 561.0,236.0 562.5,236.9 564.0,245.2 565.6,239.4 567.1,243.5 568.6,243.3 570.1,244.5 571.7,249.8 573.2,244.4 574.7,244.0 576.2,258.5 577.7,241.6 579.3,247.3 580.8,255.0 582.3,244.4 583.8,262.1 585.4,234.9 586.9,248.5 588.4,257.4 589.9,235.8 591.4,242.3 593.0,251.4 594.5,241.6 596.0,245.3 597.5,254.5 599.1,255.2 600.6,249.2 602.1,251.5 603.6,261.7 605.1,245.6 606.7,241.9 608.2,261.1 609.7,247.4 611.2,255.4 612.7,246.8 614.3,247.9 615.8,251.9 617.3,258.4 618.8,252.2 620.4,254.3 621.9,256.9 623.4,252.3 624.9,255.0 626.4,251.2 628.0,245.9 629.5,263.2 631.0,253.4 632.5,258.4 634.1,249.5 635.6,240.3 637.1,240.7 638.6,261.7 640.1,244.5 641.7,246.3 643.2,255.6 644.7,249.9 646.2,244.8 647.7,256.1 649.3,246.9 650.8,244.4 652.3,250.4 653.8,245.2 655.4,244.9 656.9,236.6 658.4,243.0 659.9,249.5 661.4,248.9 663.0,239.4 664.5,257.5 666.0,246.8 667.5,252.8 669.1,242.0 670.6,232.7 672.1,244.2 673.6,247.8 675.1,234.6 676.7,233.0 678.2,238.4 679.7,242.3 681.2,235.4 682.7,238.3 684.3,252.2 685.8,239.1 687.3,250.6 688.8,249.2 690.4,237.8 691.9,258.4 693.4,237.3 694.9,246.5 696.4,248.8 698.0,239.8 699.5,239.4 701.0,257.4 702.5,253.4 704.1,247.1 705.6,243.4 707.1,261.1 708.6,242.3 710.1,258.9 711.7,248.4 713.2,255.7 714.7,260.5 716.2,243.4 717.7,251.3 719.3,235.1 720.8,248.3 722.3,253.6 723.8,246.2 725.4,235.1 726.9,254.7 728.4,238.9 729.9,251.0 731.4,254.4 733.0,252.1 734.5,245.7 736.0,242.5 737.5,236.2 739.1,239.8 740.6,242.5 742.1,245.5 743.6,246.7 745.1,239.4 746.7,249.8 748.2,250.0 749.7,246.4 751.2,239.6 752.7,250.0 754.3,246.6 755.8,251.8 757.3,247.3 758.8,259.6 760.4,240.8 761.9,238.4 763.4,241.6 764.9,249.3 766.4,241.2 768.0,247.0 769.5,250.3 771.0,235.2 772.5,260.0 774.1,252.6 775.6,245.2 777.1,249.3 778.6,242.5 780.1,237.9 781.7,252.5 783.2,245.4 784.7,254.4 786.2,261.4 787.8,242.9 789.3,261.5 790.8,250.1 792.3,252.3 793.8,241.2 795.4,241.5 796.9,245.1 798.4,241.6 799.9,246.7 801.4,250.4 803.0,240.5 804.5,227.4 806.0,246.3 807.5,243.1 809.1,249.1 810.6,249.4 812.1,233.0 813.6,244.0 815.1,241.1 816.7,240.2 818.2,245.9 819.7,248.4 821.2,242.4 822.8,233.4 824.3,245.1 825.8,247.3 827.3,245.4 828.8,250.9 830.4,236.1 831.9,238.9 833.4,237.6 834.9,243.3 836.4,243.3 838.0,235.9 839.5,236.3 841.0,240.0 842.5,242.0 844.1,243.5 845.6,237.9 847.1,234.9 848.6,240.5 850.1,255.2 851.7,241.1 853.2,238.0 854.7,243.7 856.2,234.1 857.8,256.9 859.3,247.0 860.8,238.9 862.3,238.3 863.8,239.0 865.4,232.3 866.9,244.4 868.4,248.3 869.9,247.7 871.4,233.4 873.0,236.8 874.5,242.9 876.0,241.1 877.5,235.5 879.1,256.2 880.6,233.2 882.1,236.2 883.6,237.7 885.1,245.0 886.7,244.3 888.2,244.1 889.7,244.5 891.2,240.3 892.8,233.1 894.3,248.3 895.8,241.8 897.3,247.9 898.8,247.2 900.4,251.7 901.9,242.1 903.4,243.7 904.9,240.5 906.4,242.3 908.0,253.5 909.5,237.6 911.0,249.5 912.5,259.6 914.1,240.2 915.6,252.1 917.1,235.4 918.6,252.3 920.1,239.2 921.7,239.4 923.2,262.0 924.7,259.2 926.2,242.6 927.8,248.4 929.3,236.5 930.8,249.7 932.3,245.4 933.8,242.1 935.4,244.8 936.9,246.5 938.4,247.3 939.9,257.0 941.4,244.2 943.0,247.8 944.5,249.0 946.0,249.6 947.5,249.5 949.1,247.4 950.6,247.6 952.1,236.3 953.6,238.8 955.1,247.0 956.7,236.7 958.2,246.1 959.7,242.3 961.2,238.1 962.8,240.1 964.3,239.8 965.8,252.6 967.3,249.6 968.8,233.9 970.4,243.4 971.9,251.6 973.4,241.4 974.9,237.6 976.5,240.4 978.0,245.6 979.5,249.9 981.0,249.4 982.5,236.1 984.1,244.4 985.6,251.8 987.1,242.8 988.6,242.1 990.1,242.8 991.7,248.0 993.2,239.3 994.7,236.6 996.2,255.7 997.8,253.8 999.3,257.9 1000.8,254.1 1002.3,256.8 1003.8,247.3 1005.4,245.8 1006.9,254.8 1008.4,246.7 1009.9,250.8 1011.5,261.5 1013.0,252.0 1014.5,245.8 1016.0,254.1 1017.5,242.8 1019.1,244.7 1020.6,262.2 1022.1,249.0 1023.6,243.0 1025.1,240.5 1026.7,249.6 1028.2,250.5 1029.7,258.2 1031.2,247.4 1032.8,240.3 1034.3,247.0 1035.8,251.1 1037.3,252.6 1038.8,255.1 1040.4,250.5 1041.9,256.2 1043.4,242.4 1044.9,236.5 1046.5,258.7 1048.0,245.9 1049.5,245.1 1051.0,258.2 1052.5,252.3 1054.1,247.3 1055.6,250.3 1057.1,253.7 1058.6,245.0 1060.1,250.9 1061.7,249.5 1063.2,255.1 1064.7,266.7 1066.2,251.5 1067.8,241.3 1069.3,247.6 1070.8,242.5 1070.8,438.6" fill="none" stroke="rgba(245,165,80,0.55)" stroke-width="1.5"/>
<line x1="269" y1="235.6" x2="1086" y2="235.6" stroke="#f0303c" stroke-width="1.3"/>
<line x1="269" y1="234.4" x2="1086" y2="234.4" stroke="#a060b8" stroke-width="1.2"/>
<circle cx="269.5" cy="235" r="3.3" fill="#fff" stroke="#e8303f" stroke-width="1.4"/>
<circle cx="269.5" cy="235" r="3.3" fill="none" stroke="rgba(140,60,180,0.5)" stroke-width="1"/>
<text x="275" y="231.5" font-size="9.5" class="pct" fill="#333"><tspan class="j">受信</tspan> 95<tspan class="j">パーセンタイル</tspan></text>
<text x="634" y="231.5" font-size="9.5" class="pct" fill="#333"><tspan class="j">送信</tspan> 95<tspan class="j">パーセンタイル</tspan></text>
<line x1="281.0" y1="439" x2="281.0" y2="441" stroke="#e0e0e0"/>
<text x="281.0" y="450" text-anchor="middle" font-size="7.5" fill="#777">00:00</text>
<line x1="308.1" y1="439" x2="308.1" y2="441" stroke="#e0e0e0"/>
<text x="308.1" y="450" text-anchor="middle" font-size="7.5" fill="#777">00:27</text>
<line x1="335.3" y1="439" x2="335.3" y2="441" stroke="#e0e0e0"/>
<text x="335.3" y="450" text-anchor="middle" font-size="7.5" fill="#777">00:54</text>
<line x1="362.4" y1="439" x2="362.4" y2="441" stroke="#e0e0e0"/>
<text x="362.4" y="450" text-anchor="middle" font-size="7.5" fill="#777">01:21</text>
<line x1="389.6" y1="439" x2="389.6" y2="441" stroke="#e0e0e0"/>
<text x="389.6" y="450" text-anchor="middle" font-size="7.5" fill="#777">01:48</text>
<line x1="416.7" y1="439" x2="416.7" y2="441" stroke="#e0e0e0"/>
<text x="416.7" y="450" text-anchor="middle" font-size="7.5" fill="#777">02:15</text>
<line x1="443.9" y1="439" x2="443.9" y2="441" stroke="#e0e0e0"/>
<text x="443.9" y="450" text-anchor="middle" font-size="7.5" fill="#777">02:42</text>
<line x1="471.0" y1="439" x2="471.0" y2="441" stroke="#e0e0e0"/>
<text x="471.0" y="450" text-anchor="middle" font-size="7.5" fill="#777">03:09</text>
<line x1="498.2" y1="439" x2="498.2" y2="441" stroke="#e0e0e0"/>
<text x="498.2" y="450" text-anchor="middle" font-size="7.5" fill="#777">03:36</text>
<line x1="525.3" y1="439" x2="525.3" y2="441" stroke="#e0e0e0"/>
<text x="525.3" y="450" text-anchor="middle" font-size="7.5" fill="#777">04:03</text>
<line x1="552.5" y1="439" x2="552.5" y2="441" stroke="#e0e0e0"/>
<text x="552.5" y="450" text-anchor="middle" font-size="7.5" fill="#777">04:30</text>
<line x1="579.6" y1="439" x2="579.6" y2="441" stroke="#e0e0e0"/>
<text x="579.6" y="450" text-anchor="middle" font-size="7.5" fill="#777">04:57</text>
<line x1="606.7" y1="439" x2="606.7" y2="441" stroke="#e0e0e0"/>
<text x="606.7" y="450" text-anchor="middle" font-size="7.5" fill="#777">05:24</text>
<line x1="633.9" y1="439" x2="633.9" y2="441" stroke="#e0e0e0"/>
<text x="633.9" y="450" text-anchor="middle" font-size="7.5" fill="#777">05:51</text>
<line x1="661.0" y1="439" x2="661.0" y2="441" stroke="#e0e0e0"/>
<text x="661.0" y="450" text-anchor="middle" font-size="7.5" fill="#777">06:18</text>
<line x1="688.2" y1="439" x2="688.2" y2="441" stroke="#e0e0e0"/>
<text x="688.2" y="450" text-anchor="middle" font-size="7.5" fill="#777">06:45</text>
<line x1="715.3" y1="439" x2="715.3" y2="441" stroke="#e0e0e0"/>
<text x="715.3" y="450" text-anchor="middle" font-size="7.5" fill="#777">07:12</text>
<line x1="742.5" y1="439" x2="742.5" y2="441" stroke="#e0e0e0"/>
<text x="742.5" y="450" text-anchor="middle" font-size="7.5" fill="#777">07:39</text>
<line x1="769.6" y1="439" x2="769.6" y2="441" stroke="#e0e0e0"/>
<text x="769.6" y="450" text-anchor="middle" font-size="7.5" fill="#777">08:06</text>
<line x1="796.8" y1="439" x2="796.8" y2="441" stroke="#e0e0e0"/>
<text x="796.8" y="450" text-anchor="middle" font-size="7.5" fill="#777">08:33</text>
<line x1="823.9" y1="439" x2="823.9" y2="441" stroke="#e0e0e0"/>
<text x="823.9" y="450" text-anchor="middle" font-size="7.5" fill="#777">09:00</text>
<line x1="851.0" y1="439" x2="851.0" y2="441" stroke="#e0e0e0"/>
<text x="851.0" y="450" text-anchor="middle" font-size="7.5" fill="#777">09:27</text>
<line x1="878.2" y1="439" x2="878.2" y2="441" stroke="#e0e0e0"/>
<text x="878.2" y="450" text-anchor="middle" font-size="7.5" fill="#777">09:54</text>
<line x1="905.3" y1="439" x2="905.3" y2="441" stroke="#e0e0e0"/>
<text x="905.3" y="450" text-anchor="middle" font-size="7.5" fill="#777">10:21</text>
<line x1="932.5" y1="439" x2="932.5" y2="441" stroke="#e0e0e0"/>
<text x="932.5" y="450" text-anchor="middle" font-size="7.5" fill="#777">10:48</text>
<line x1="959.6" y1="439" x2="959.6" y2="441" stroke="#e0e0e0"/>
<text x="959.6" y="450" text-anchor="middle" font-size="7.5" fill="#777">11:15</text>
<line x1="986.8" y1="439" x2="986.8" y2="441" stroke="#e0e0e0"/>
<text x="986.8" y="450" text-anchor="middle" font-size="7.5" fill="#777">11:42</text>
<line x1="1013.9" y1="439" x2="1013.9" y2="441" stroke="#e0e0e0"/>
<text x="1013.9" y="450" text-anchor="middle" font-size="7.5" fill="#777">12:09</text>
<line x1="1041.1" y1="439" x2="1041.1" y2="441" stroke="#e0e0e0"/>
<text x="1041.1" y="450" text-anchor="middle" font-size="7.5" fill="#777">12:36</text>
<line x1="1068.2" y1="439" x2="1068.2" y2="441" stroke="#e0e0e0"/>
<text x="1068.2" y="450" text-anchor="middle" font-size="7.5" fill="#777">13:03</text>
<text x="676" y="467.5" text-anchor="middle" font-size="9" font-weight="bold" class="xt" fill="#666"><tspan class="j">日時</tspan> ( HH:MM )</text>
<text transform="translate(241.5,313) rotate(-90)" text-anchor="middle" font-size="9" font-weight="bold" class="yt" fill="#666"><tspan class="j">トラフィック</tspan> ( KB )</text>
</svg>
<div class="legend" style="left:1105px;top:196px"><div class="sq" style="top:0;background:#00bfdf"></div><div class="lb" style="top:1.5px">IN</div></div>
<div class="legend" style="left:1105px;top:218px"><div class="sq" style="top:0;background:#f9a13a"></div><div class="lb" style="top:1.5px">OUT</div></div>

<table class="dt">
<colgroup><col style="width:176px"><col style="width:176px"><col style="width:176px"><col style="width:176px"><col style="width:176px"><col></colgroup>
<tr><th><span class="j">カテゴリ</span></th><th><span class="j">合計</span></th><th><span class="j">最大</span></th><th><span class="j">平均</span></th><th>95<span class="j">パーセンタイル</span></th><th><span class="j">標準偏差</span></th></tr>
<tr><td>InTraffic</td><td>27.264 MB</td><td>38.511 KB</td><td>34.643 KB</td><td>36.575 KB</td><td>1.527 KB</td></tr>
<tr><td>OutTraffic</td><td>27.331 MB</td><td>38.425 KB</td><td>34.728 KB</td><td>36.747 KB</td><td>1.556 KB</td></tr>
</table>

<svg class="abs" style="left:238px;top:516px" width="10" height="12" viewBox="238 516 10 12"><path d="M240 521.6 L242.6 518 L245.2 521.6 Z" fill="#bdbdbd"/><path d="M240.4 522.6 L245 522.6 L242.7 525.8 Z" fill="#dedede"/></svg>
<!-- panel 2 -->
<div class="ptitle" style="top:623px;height:38px;padding-top:3px">DataCentreBasicV9-NBAR/CBQoS [GigabitEthernet0/1/1] | <span class="j">期間：</span> <span class="j">今日</span> Report [2021-03-24 14:30 - 2021-03-25 03:36]</div>
<svg class="abs" style="left:1160px;top:635px" width="70" height="17" viewBox="1160 143 70 17">
  <rect x="1162.6" y="145.6" width="15.8" height="11.6" fill="#fafafa" stroke="#9a9a9a" stroke-width="1.1"/>
  <path d="M1163.2 156.9 L1163.2 153.2 Q1166.5 155 1170 153.4 Q1174 151.5 1178 149.8 L1178 156.9 Z" fill="#7c7c7c"/>
  <path d="M1163.2 151.6 Q1166.5 153.4 1170 151.8 Q1174 150 1178 148 L1178 149.8 Q1174 151.5 1170 153.4 Q1166.5 155 1163.2 153.2 Z" fill="#cfcfcf"/>
  <line x1="1186.5" y1="144.7" x2="1186.5" y2="157.5" stroke="#e6e6e6" stroke-width="0.8"/>
  <path d="M1187.3 155.8 V151.4 H1189.9 V155.8 Z M1190.2 155.8 V149.4 H1192.8 V155.8 Z M1193.1 155.8 V147.9 H1195.7 V155.8 Z M1196 155.8 V145.8 H1198.6 V155.8 Z M1198.9 155.8 V147.9 H1201.8 V155.8 Z" fill="#c4c4c4"/>
  <path d="M1211 154.6 Q1215.5 145 1220.5 151.2 L1224 154.6 M1218.5 154 L1226 146.6 M1211 152.2 L1216 150.3 L1221 153.2 L1226 150.6 M1212.5 154.8 L1226 154.8" fill="none" stroke="#8c8c8c" stroke-width="0.9"/>
</svg>
<svg width="1266" height="170" viewBox="0 660 1266 170" style="position:absolute;left:0;top:660px">
<line x1="265" y1="932.6" x2="1086" y2="932.6" stroke="#e8e8e8" stroke-width="1"/>
<line x1="260" y1="932.6" x2="265" y2="932.6" stroke="#e0e0e0" stroke-width="1"/>
<text x="259" y="935.6" text-anchor="end" font-size="8" fill="#777">0</text>
<line x1="265" y1="910.5" x2="1086" y2="910.5" stroke="#e8e8e8" stroke-width="1"/>
<line x1="260" y1="910.5" x2="265" y2="910.5" stroke="#e0e0e0" stroke-width="1"/>
<text x="259" y="913.5" text-anchor="end" font-size="8" fill="#777">1</text>
<line x1="265" y1="888.5" x2="1086" y2="888.5" stroke="#e8e8e8" stroke-width="1"/>
<line x1="260" y1="888.5" x2="265" y2="888.5" stroke="#e0e0e0" stroke-width="1"/>
<text x="259" y="891.5" text-anchor="end" font-size="8" fill="#777">2</text>
<line x1="265" y1="866.4" x2="1086" y2="866.4" stroke="#e8e8e8" stroke-width="1"/>
<line x1="260" y1="866.4" x2="265" y2="866.4" stroke="#e0e0e0" stroke-width="1"/>
<text x="259" y="869.4" text-anchor="end" font-size="8" fill="#777">3</text>
<line x1="265" y1="844.4" x2="1086" y2="844.4" stroke="#e8e8e8" stroke-width="1"/>
<line x1="260" y1="844.4" x2="265" y2="844.4" stroke="#e0e0e0" stroke-width="1"/>
<text x="259" y="847.4" text-anchor="end" font-size="8" fill="#777">4</text>
<line x1="265" y1="822.3" x2="1086" y2="822.3" stroke="#e8e8e8" stroke-width="1"/>
<line x1="260" y1="822.3" x2="265" y2="822.3" stroke="#e0e0e0" stroke-width="1"/>
<text x="259" y="825.3" text-anchor="end" font-size="8" fill="#777">5</text>
<line x1="265" y1="800.2" x2="1086" y2="800.2" stroke="#e8e8e8" stroke-width="1"/>
<line x1="260" y1="800.2" x2="265" y2="800.2" stroke="#e0e0e0" stroke-width="1"/>
<text x="259" y="803.2" text-anchor="end" font-size="8" fill="#777">6</text>
<line x1="265" y1="778.2" x2="1086" y2="778.2" stroke="#e8e8e8" stroke-width="1"/>
<line x1="260" y1="778.2" x2="265" y2="778.2" stroke="#e0e0e0" stroke-width="1"/>
<text x="259" y="781.2" text-anchor="end" font-size="8" fill="#777">7</text>
<line x1="265" y1="756.1" x2="1086" y2="756.1" stroke="#e8e8e8" stroke-width="1"/>
<line x1="260" y1="756.1" x2="265" y2="756.1" stroke="#e0e0e0" stroke-width="1"/>
<text x="259" y="759.1" text-anchor="end" font-size="8" fill="#777">8</text>
<line x1="265" y1="734.1" x2="1086" y2="734.1" stroke="#e8e8e8" stroke-width="1"/>
<line x1="260" y1="734.1" x2="265" y2="734.1" stroke="#e0e0e0" stroke-width="1"/>
<text x="259" y="737.1" text-anchor="end" font-size="8" fill="#777">9</text>
<line x1="265" y1="712.0" x2="1086" y2="712.0" stroke="#e8e8e8" stroke-width="1"/>
<line x1="260" y1="712.0" x2="265" y2="712.0" stroke="#e0e0e0" stroke-width="1"/>
<text x="259" y="715.0" text-anchor="end" font-size="8" fill="#777">10</text>
<line x1="265" y1="683.5" x2="1086" y2="683.5" stroke="#eaeaea"/>
<line x1="265.5" y1="683" x2="265.5" y2="830" stroke="#e6e6e6"/>
<line x1="1086.5" y1="683" x2="1086.5" y2="830" stroke="#eaeaea"/>
<polygon points="281.0,960 281.0,771.6 282.0,781.1 283.0,772.9 284.0,771.6 285.0,754.6 286.0,749.8 287.0,778.5 288.0,778.7 289.0,778.5 290.0,773.1 291.0,754.9 292.0,765.8 293.0,757.6 294.0,750.7 295.0,758.4 296.0,754.6 297.0,736.8 298.0,765.6 299.0,769.9 300.0,778.6 301.0,751.1 302.0,751.0 303.0,775.1 304.0,766.3 305.0,791.9 306.0,786.7 307.0,771.9 308.0,765.7 309.0,777.0 310.0,748.5 311.0,786.5 312.0,788.6 313.0,771.8 314.0,758.1 315.0,774.3 316.0,748.7 317.0,764.1 318.0,760.7 319.0,757.8 320.0,767.8 321.0,778.7 322.0,772.6 323.0,754.5 324.0,751.2 325.0,761.6 326.0,732.9 327.0,764.6 328.0,762.2 329.0,769.6 330.0,747.9 331.1,754.0 332.1,782.3 333.1,772.9 334.1,779.7 335.1,758.2 336.1,770.2 337.1,757.0 338.1,753.4 339.1,774.2 340.1,774.9 341.1,764.4 342.1,745.9 343.1,772.2 344.1,771.3 345.1,776.6 346.1,781.8 347.1,765.1 348.1,764.1 349.1,770.2 350.1,773.1 351.1,778.4 352.1,770.3 353.1,767.8 354.1,762.5 355.1,786.8 356.1,758.3 357.1,762.5 358.1,745.6 359.1,769.0 360.1,777.1 361.1,772.6 362.1,777.0 363.1,774.8 364.1,774.6 365.1,755.2 366.1,782.8 367.1,768.2 368.1,739.2 369.1,766.9 370.1,773.2 371.1,771.0 372.1,777.0 373.1,770.3 374.1,768.3 375.1,769.0 376.1,765.2 377.1,759.8 378.1,764.2 379.1,761.4 380.1,743.4 381.1,767.0 382.1,778.3 383.1,771.2 384.1,764.2 385.1,752.2 386.1,772.2 387.1,777.4 388.1,778.7 389.1,782.1 390.1,765.3 391.1,767.4 392.1,771.3 393.1,769.8 394.1,754.8 395.1,773.6 396.1,771.6 397.1,775.2 398.1,765.8 399.1,772.1 400.1,784.7 401.1,783.4 402.1,772.4 403.1,776.0 404.1,748.2 405.1,774.3 406.1,752.1 407.1,757.1 408.1,751.9 409.1,762.9 410.1,787.7 411.1,776.9 412.1,764.3 413.1,761.9 414.1,750.9 415.1,770.3 416.1,757.7 417.1,764.7 418.1,766.8 419.1,752.9 420.1,756.4 421.1,756.1 422.1,757.8 423.1,767.5 424.1,768.5 425.1,786.1 426.1,790.2 427.1,745.1 428.1,757.6 429.2,768.1 430.2,761.5 431.2,761.0 432.2,769.7 433.2,769.0 434.2,778.1 435.2,774.7 436.2,760.1 437.2,738.5 438.2,769.4 439.2,761.2 440.2,782.3 441.2,783.9 442.2,770.9 443.2,772.7 444.2,771.3 445.2,793.6 446.2,741.5 447.2,730.8 448.2,743.9 449.2,760.7 450.2,778.0 451.2,781.6 452.2,772.0 453.2,779.3 454.2,788.1 455.2,775.6 456.2,758.4 457.2,764.7 458.2,763.2 459.2,743.7 460.2,767.6 461.2,753.3 462.2,768.9 463.2,775.1 464.2,783.0 465.2,759.2 466.2,770.1 467.2,762.9 468.2,748.2 469.2,768.6 470.2,766.8 471.2,777.9 472.2,775.7 473.2,774.0 474.2,766.1 475.2,772.9 476.2,770.8 477.2,757.6 478.2,758.6 479.2,773.7 480.2,772.0 481.2,783.5 482.2,772.5 483.2,758.6 484.2,761.1 485.2,770.9 486.2,786.7 487.2,772.8 488.2,774.2 489.2,756.3 490.2,741.4 491.2,750.5 492.2,750.4 493.2,766.0 494.2,766.4 495.2,773.2 496.2,752.9 497.2,781.3 498.2,786.2 499.2,767.3 500.2,772.9 501.2,767.8 502.2,784.6 503.2,784.0 504.2,758.6 505.2,752.0 506.2,761.0 507.2,765.0 508.2,772.7 509.2,769.3 510.2,761.3 511.2,754.4 512.2,768.1 513.2,762.7 514.2,754.4 515.2,770.0 516.2,764.4 517.2,774.9 518.2,767.3 519.2,760.5 520.2,756.2 521.2,759.1 522.2,764.9 523.2,777.3 524.2,762.3 525.2,784.5 526.2,757.7 527.2,769.8 528.3,761.8 529.3,760.5 530.3,764.9 531.3,777.2 532.3,750.7 533.3,765.9 534.3,765.8 535.3,761.9 536.3,765.2 537.3,769.5 538.3,755.8 539.3,792.8 540.3,753.9 541.3,762.5 542.3,789.1 543.3,779.3 544.3,778.2 545.3,752.2 546.3,783.6 547.3,769.8 548.3,786.5 549.3,780.1 550.3,759.4 551.3,771.5 552.3,760.7 553.3,772.2 554.3,763.0 555.3,766.3 556.3,766.9 557.3,781.3 558.3,766.1 559.3,759.3 560.3,762.7 561.3,791.6 562.3,781.1 563.3,774.7 564.3,771.8 565.3,758.7 566.3,767.2 567.3,765.3 568.3,770.7 569.3,752.1 570.3,756.7 571.3,768.1 572.3,775.6 573.3,787.2 574.3,785.2 575.3,774.5 576.3,793.6 577.3,765.9 578.3,788.6 579.3,767.2 580.3,755.5 581.3,759.0 582.3,769.9 583.3,775.2 584.3,778.6 585.3,734.6 586.3,757.5 587.3,780.9 588.3,770.3 589.3,743.8 590.3,761.2 591.3,752.7 592.3,759.9 593.3,761.3 594.3,763.3 595.3,750.3 596.3,753.9 597.3,777.2 598.3,777.4 599.3,778.8 600.3,754.7 601.3,764.0 602.3,786.3 603.3,760.0 604.3,768.3 605.3,740.0 606.3,764.7 607.3,766.0 608.3,778.1 609.3,752.5 610.3,769.8 611.3,782.5 612.3,771.3 613.3,773.0 614.3,764.5 615.3,734.3 616.3,764.5 617.3,754.7 618.3,767.0 619.3,764.2 620.3,779.0 621.3,756.5 622.3,754.8 623.3,783.4 624.3,758.6 625.3,787.0 626.3,758.9 627.4,765.0 628.4,759.4 629.4,765.6 630.4,760.4 631.4,777.2 632.4,736.5 633.4,749.8 634.4,746.4 635.4,763.7 636.4,787.7 637.4,793.6 638.4,771.5 639.4,778.7 640.4,777.3 641.4,764.4 642.4,745.5 643.4,759.2 644.4,771.7 645.4,769.7 646.4,766.2 647.4,743.8 648.4,761.9 649.4,761.5 650.4,763.1 651.4,780.3 652.4,749.9 653.4,761.8 654.4,767.3 655.4,769.2 656.4,771.3 657.4,742.8 658.4,761.0 659.4,762.8 660.4,771.0 661.4,775.0 662.4,766.6 663.4,768.9 664.4,781.2 665.4,793.6 666.4,773.1 667.4,747.0 668.4,768.6 669.4,764.5 670.4,736.5 671.4,773.6 672.4,735.6 673.4,769.6 674.4,779.8 675.4,720.8 676.4,766.7 677.4,772.7 678.4,758.8 679.4,774.8 680.4,762.2 681.4,752.1 682.4,764.5 683.4,775.7 684.4,776.6 685.4,754.2 686.4,751.4 687.4,748.8 688.4,759.2 689.4,775.5 690.4,745.6 691.4,755.8 692.4,776.2 693.4,768.3 694.4,752.9 695.4,767.8 696.4,778.8 697.4,774.6 698.4,778.2 699.4,767.7 700.4,753.3 701.4,782.5 702.4,768.2 703.4,767.1 704.4,762.1 705.4,780.3 706.4,772.7 707.4,759.6 708.4,748.6 709.4,753.5 710.4,764.5 711.4,757.5 712.4,783.7 713.4,771.4 714.4,763.8 715.4,779.3 716.4,772.1 717.4,752.2 718.4,765.4 719.4,762.2 720.4,784.6 721.4,780.4 722.4,760.8 723.4,754.0 724.4,756.4 725.5,759.5 726.5,764.1 727.5,771.1 728.5,761.5 729.5,781.1 730.5,787.2 731.5,768.0 732.5,760.6 733.5,778.3 734.5,757.5 735.5,778.0 736.5,786.2 737.5,793.6 738.5,785.2 739.5,774.1 740.5,779.7 741.5,753.9 742.5,757.5 743.5,789.6 744.5,747.4 745.5,775.9 746.5,766.9 747.5,790.7 748.5,768.9 749.5,788.8 750.5,773.9 751.5,771.9 752.5,767.2 753.5,765.8 754.5,786.4 755.5,754.0 756.5,756.0 757.5,765.5 758.5,781.8 759.5,774.0 760.5,781.6 761.5,783.5 762.5,764.2 763.5,763.2 764.5,771.7 765.5,736.2 766.5,760.6 767.5,770.0 768.5,760.8 769.5,778.2 770.5,771.0 771.5,755.6 772.5,780.4 773.5,769.6 774.5,765.1 775.5,780.0 776.5,767.8 777.5,765.8 778.5,774.7 779.5,760.5 780.5,763.7 781.5,776.2 782.5,773.7 783.5,773.8 784.5,752.7 785.5,789.7 786.5,765.3 787.5,756.8 788.5,733.1 789.5,748.0 790.5,757.8 791.5,784.4 792.5,778.8 793.5,774.5 794.5,777.7 795.5,755.2 796.5,746.2 797.5,748.0 798.5,753.4 799.5,769.9 800.5,775.7 801.5,767.6 802.5,736.7 803.5,764.1 804.5,759.8 805.5,772.4 806.5,771.4 807.5,765.5 808.5,773.0 809.5,771.4 810.5,767.1 811.5,765.7 812.5,754.2 813.5,767.0 814.5,779.5 815.5,767.9 816.5,773.1 817.5,756.8 818.5,770.9 819.5,768.8 820.5,781.2 821.5,792.6 822.5,771.0 823.5,763.7 824.6,764.2 825.6,763.0 826.6,749.0 827.6,754.6 828.6,767.6 829.6,758.7 830.6,763.3 831.6,767.6 832.6,775.0 833.6,756.9 834.6,760.1 835.6,763.1 836.6,758.2 837.6,753.3 838.6,756.2 839.6,772.2 840.6,760.6 841.6,754.1 842.6,742.6 843.6,754.4 844.6,774.4 845.6,765.5 846.6,771.5 847.6,759.8 848.6,758.3 849.6,776.7 850.6,770.4 851.6,767.0 852.6,762.5 853.6,760.1 854.6,766.9 855.6,764.4 856.6,781.2 857.6,770.8 858.6,753.6 859.6,774.4 860.6,770.5 861.6,775.7 862.6,773.5 863.6,770.3 864.6,772.5 865.6,765.9 866.6,768.1 867.6,764.3 868.6,776.7 869.6,768.5 870.6,769.1 871.6,772.3 872.6,766.5 873.6,770.6 874.6,774.4 875.6,767.0 876.6,760.7 877.6,747.4 878.6,764.4 879.6,763.1 880.6,790.7 881.6,767.9 882.6,753.6 883.6,750.8 884.6,755.2 885.6,749.7 886.6,768.0 887.6,756.0 888.6,788.5 889.6,762.5 890.6,784.2 891.6,762.7 892.6,784.2 893.6,758.4 894.6,769.6 895.6,749.6 896.6,768.3 897.6,767.5 898.6,760.9 899.6,790.7 900.6,771.6 901.6,783.8 902.6,759.4 903.6,747.4 904.6,771.4 905.6,780.9 906.6,787.8 907.6,739.1 908.6,761.9 909.6,762.6 910.6,777.7 911.6,774.0 912.6,762.9 913.6,773.8 914.6,775.6 915.6,773.3 916.6,780.5 917.6,730.8 918.6,749.3 919.6,768.2 920.6,741.0 921.6,751.2 922.6,774.4 923.7,793.6 924.7,773.9 925.7,761.7 926.7,747.8 927.7,757.4 928.7,766.1 929.7,764.8 930.7,775.3 931.7,790.3 932.7,779.7 933.7,749.7 934.7,774.6 935.7,778.0 936.7,778.5 937.7,778.5 938.7,783.4 939.7,781.9 940.7,792.3 941.7,769.4 942.7,769.0 943.7,779.6 944.7,774.7 945.7,751.5 946.7,783.0 947.7,749.1 948.7,771.1 949.7,771.8 950.7,770.5 951.7,774.3 952.7,776.4 953.7,780.9 954.7,773.9 955.7,763.8 956.7,782.8 957.7,775.4 958.7,785.9 959.7,790.0 960.7,781.9 961.7,762.6 962.7,757.0 963.7,766.5 964.7,774.6 965.7,772.7 966.7,758.9 967.7,762.8 968.7,758.5 969.7,771.4 970.7,758.3 971.7,774.7 972.7,762.9 973.7,760.3 974.7,743.7 975.7,775.7 976.7,784.2 977.7,770.9 978.7,781.1 979.7,770.7 980.7,777.5 981.7,779.0 982.7,772.1 983.7,768.6 984.7,771.5 985.7,784.6 986.7,750.9 987.7,752.3 988.7,759.2 989.7,783.4 990.7,760.9 991.7,784.4 992.7,793.6 993.7,771.7 994.7,779.8 995.7,776.5 996.7,760.7 997.7,758.0 998.7,745.8 999.7,775.2 1000.7,790.2 1001.7,762.3 1002.7,762.5 1003.7,774.2 1004.7,781.9 1005.7,774.1 1006.7,748.5 1007.7,754.8 1008.7,752.3 1009.7,746.3 1010.7,777.8 1011.7,783.5 1012.7,789.4 1013.7,776.8 1014.7,784.4 1015.7,787.7 1016.7,784.5 1017.7,770.7 1018.7,764.0 1019.7,764.1 1020.7,777.2 1021.8,739.8 1022.8,770.8 1023.8,769.4 1024.8,764.7 1025.8,766.4 1026.8,770.8 1027.8,766.3 1028.8,752.6 1029.8,772.1 1030.8,772.2 1031.8,758.4 1032.8,755.7 1033.8,753.0 1034.8,762.9 1035.8,779.2 1036.8,783.3 1037.8,785.8 1038.8,772.9 1039.8,749.4 1040.8,765.0 1041.8,763.4 1042.8,767.6 1043.8,784.0 1044.8,766.7 1045.8,771.8 1046.8,763.0 1047.8,761.1 1048.8,750.0 1049.8,759.1 1050.8,750.3 1051.8,780.5 1052.8,777.0 1053.8,746.7 1054.8,771.8 1055.8,733.3 1056.8,758.4 1057.8,772.1 1058.8,775.3 1059.8,792.4 1060.8,779.9 1061.8,785.0 1062.8,753.1 1063.8,761.1 1064.8,763.7 1065.8,793.6 1066.8,768.6 1067.8,788.4 1068.8,769.3 1069.8,780.5 1070.8,775.8 1070.8,960" fill="rgba(0,191,223,0.3)"/>
<polyline points="281.0,771.6 282.0,781.1 283.0,772.9 284.0,771.6 285.0,754.6 286.0,749.8 287.0,778.5 288.0,778.7 289.0,778.5 290.0,773.1 291.0,754.9 292.0,765.8 293.0,757.6 294.0,750.7 295.0,758.4 296.0,754.6 297.0,736.8 298.0,765.6 299.0,769.9 300.0,778.6 301.0,751.1 302.0,751.0 303.0,775.1 304.0,766.3 305.0,791.9 306.0,786.7 307.0,771.9 308.0,765.7 309.0,777.0 310.0,748.5 311.0,786.5 312.0,788.6 313.0,771.8 314.0,758.1 315.0,774.3 316.0,748.7 317.0,764.1 318.0,760.7 319.0,757.8 320.0,767.8 321.0,778.7 322.0,772.6 323.0,754.5 324.0,751.2 325.0,761.6 326.0,732.9 327.0,764.6 328.0,762.2 329.0,769.6 330.0,747.9 331.1,754.0 332.1,782.3 333.1,772.9 334.1,779.7 335.1,758.2 336.1,770.2 337.1,757.0 338.1,753.4 339.1,774.2 340.1,774.9 341.1,764.4 342.1,745.9 343.1,772.2 344.1,771.3 345.1,776.6 346.1,781.8 347.1,765.1 348.1,764.1 349.1,770.2 350.1,773.1 351.1,778.4 352.1,770.3 353.1,767.8 354.1,762.5 355.1,786.8 356.1,758.3 357.1,762.5 358.1,745.6 359.1,769.0 360.1,777.1 361.1,772.6 362.1,777.0 363.1,774.8 364.1,774.6 365.1,755.2 366.1,782.8 367.1,768.2 368.1,739.2 369.1,766.9 370.1,773.2 371.1,771.0 372.1,777.0 373.1,770.3 374.1,768.3 375.1,769.0 376.1,765.2 377.1,759.8 378.1,764.2 379.1,761.4 380.1,743.4 381.1,767.0 382.1,778.3 383.1,771.2 384.1,764.2 385.1,752.2 386.1,772.2 387.1,777.4 388.1,778.7 389.1,782.1 390.1,765.3 391.1,767.4 392.1,771.3 393.1,769.8 394.1,754.8 395.1,773.6 396.1,771.6 397.1,775.2 398.1,765.8 399.1,772.1 400.1,784.7 401.1,783.4 402.1,772.4 403.1,776.0 404.1,748.2 405.1,774.3 406.1,752.1 407.1,757.1 408.1,751.9 409.1,762.9 410.1,787.7 411.1,776.9 412.1,764.3 413.1,761.9 414.1,750.9 415.1,770.3 416.1,757.7 417.1,764.7 418.1,766.8 419.1,752.9 420.1,756.4 421.1,756.1 422.1,757.8 423.1,767.5 424.1,768.5 425.1,786.1 426.1,790.2 427.1,745.1 428.1,757.6 429.2,768.1 430.2,761.5 431.2,761.0 432.2,769.7 433.2,769.0 434.2,778.1 435.2,774.7 436.2,760.1 437.2,738.5 438.2,769.4 439.2,761.2 440.2,782.3 441.2,783.9 442.2,770.9 443.2,772.7 444.2,771.3 445.2,793.6 446.2,741.5 447.2,730.8 448.2,743.9 449.2,760.7 450.2,778.0 451.2,781.6 452.2,772.0 453.2,779.3 454.2,788.1 455.2,775.6 456.2,758.4 457.2,764.7 458.2,763.2 459.2,743.7 460.2,767.6 461.2,753.3 462.2,768.9 463.2,775.1 464.2,783.0 465.2,759.2 466.2,770.1 467.2,762.9 468.2,748.2 469.2,768.6 470.2,766.8 471.2,777.9 472.2,775.7 473.2,774.0 474.2,766.1 475.2,772.9 476.2,770.8 477.2,757.6 478.2,758.6 479.2,773.7 480.2,772.0 481.2,783.5 482.2,772.5 483.2,758.6 484.2,761.1 485.2,770.9 486.2,786.7 487.2,772.8 488.2,774.2 489.2,756.3 490.2,741.4 491.2,750.5 492.2,750.4 493.2,766.0 494.2,766.4 495.2,773.2 496.2,752.9 497.2,781.3 498.2,786.2 499.2,767.3 500.2,772.9 501.2,767.8 502.2,784.6 503.2,784.0 504.2,758.6 505.2,752.0 506.2,761.0 507.2,765.0 508.2,772.7 509.2,769.3 510.2,761.3 511.2,754.4 512.2,768.1 513.2,762.7 514.2,754.4 515.2,770.0 516.2,764.4 517.2,774.9 518.2,767.3 519.2,760.5 520.2,756.2 521.2,759.1 522.2,764.9 523.2,777.3 524.2,762.3 525.2,784.5 526.2,757.7 527.2,769.8 528.3,761.8 529.3,760.5 530.3,764.9 531.3,777.2 532.3,750.7 533.3,765.9 534.3,765.8 535.3,761.9 536.3,765.2 537.3,769.5 538.3,755.8 539.3,792.8 540.3,753.9 541.3,762.5 542.3,789.1 543.3,779.3 544.3,778.2 545.3,752.2 546.3,783.6 547.3,769.8 548.3,786.5 549.3,780.1 550.3,759.4 551.3,771.5 552.3,760.7 553.3,772.2 554.3,763.0 555.3,766.3 556.3,766.9 557.3,781.3 558.3,766.1 559.3,759.3 560.3,762.7 561.3,791.6 562.3,781.1 563.3,774.7 564.3,771.8 565.3,758.7 566.3,767.2 567.3,765.3 568.3,770.7 569.3,752.1 570.3,756.7 571.3,768.1 572.3,775.6 573.3,787.2 574.3,785.2 575.3,774.5 576.3,793.6 577.3,765.9 578.3,788.6 579.3,767.2 580.3,755.5 581.3,759.0 582.3,769.9 583.3,775.2 584.3,778.6 585.3,734.6 586.3,757.5 587.3,780.9 588.3,770.3 589.3,743.8 590.3,761.2 591.3,752.7 592.3,759.9 593.3,761.3 594.3,763.3 595.3,750.3 596.3,753.9 597.3,777.2 598.3,777.4 599.3,778.8 600.3,754.7 601.3,764.0 602.3,786.3 603.3,760.0 604.3,768.3 605.3,740.0 606.3,764.7 607.3,766.0 608.3,778.1 609.3,752.5 610.3,769.8 611.3,782.5 612.3,771.3 613.3,773.0 614.3,764.5 615.3,734.3 616.3,764.5 617.3,754.7 618.3,767.0 619.3,764.2 620.3,779.0 621.3,756.5 622.3,754.8 623.3,783.4 624.3,758.6 625.3,787.0 626.3,758.9 627.4,765.0 628.4,759.4 629.4,765.6 630.4,760.4 631.4,777.2 632.4,736.5 633.4,749.8 634.4,746.4 635.4,763.7 636.4,787.7 637.4,793.6 638.4,771.5 639.4,778.7 640.4,777.3 641.4,764.4 642.4,745.5 643.4,759.2 644.4,771.7 645.4,769.7 646.4,766.2 647.4,743.8 648.4,761.9 649.4,761.5 650.4,763.1 651.4,780.3 652.4,749.9 653.4,761.8 654.4,767.3 655.4,769.2 656.4,771.3 657.4,742.8 658.4,761.0 659.4,762.8 660.4,771.0 661.4,775.0 662.4,766.6 663.4,768.9 664.4,781.2 665.4,793.6 666.4,773.1 667.4,747.0 668.4,768.6 669.4,764.5 670.4,736.5 671.4,773.6 672.4,735.6 673.4,769.6 674.4,779.8 675.4,720.8 676.4,766.7 677.4,772.7 678.4,758.8 679.4,774.8 680.4,762.2 681.4,752.1 682.4,764.5 683.4,775.7 684.4,776.6 685.4,754.2 686.4,751.4 687.4,748.8 688.4,759.2 689.4,775.5 690.4,745.6 691.4,755.8 692.4,776.2 693.4,768.3 694.4,752.9 695.4,767.8 696.4,778.8 697.4,774.6 698.4,778.2 699.4,767.7 700.4,753.3 701.4,782.5 702.4,768.2 703.4,767.1 704.4,762.1 705.4,780.3 706.4,772.7 707.4,759.6 708.4,748.6 709.4,753.5 710.4,764.5 711.4,757.5 712.4,783.7 713.4,771.4 714.4,763.8 715.4,779.3 716.4,772.1 717.4,752.2 718.4,765.4 719.4,762.2 720.4,784.6 721.4,780.4 722.4,760.8 723.4,754.0 724.4,756.4 725.5,759.5 726.5,764.1 727.5,771.1 728.5,761.5 729.5,781.1 730.5,787.2 731.5,768.0 732.5,760.6 733.5,778.3 734.5,757.5 735.5,778.0 736.5,786.2 737.5,793.6 738.5,785.2 739.5,774.1 740.5,779.7 741.5,753.9 742.5,757.5 743.5,789.6 744.5,747.4 745.5,775.9 746.5,766.9 747.5,790.7 748.5,768.9 749.5,788.8 750.5,773.9 751.5,771.9 752.5,767.2 753.5,765.8 754.5,786.4 755.5,754.0 756.5,756.0 757.5,765.5 758.5,781.8 759.5,774.0 760.5,781.6 761.5,783.5 762.5,764.2 763.5,763.2 764.5,771.7 765.5,736.2 766.5,760.6 767.5,770.0 768.5,760.8 769.5,778.2 770.5,771.0 771.5,755.6 772.5,780.4 773.5,769.6 774.5,765.1 775.5,780.0 776.5,767.8 777.5,765.8 778.5,774.7 779.5,760.5 780.5,763.7 781.5,776.2 782.5,773.7 783.5,773.8 784.5,752.7 785.5,789.7 786.5,765.3 787.5,756.8 788.5,733.1 789.5,748.0 790.5,757.8 791.5,784.4 792.5,778.8 793.5,774.5 794.5,777.7 795.5,755.2 796.5,746.2 797.5,748.0 798.5,753.4 799.5,769.9 800.5,775.7 801.5,767.6 802.5,736.7 803.5,764.1 804.5,759.8 805.5,772.4 806.5,771.4 807.5,765.5 808.5,773.0 809.5,771.4 810.5,767.1 811.5,765.7 812.5,754.2 813.5,767.0 814.5,779.5 815.5,767.9 816.5,773.1 817.5,756.8 818.5,770.9 819.5,768.8 820.5,781.2 821.5,792.6 822.5,771.0 823.5,763.7 824.6,764.2 825.6,763.0 826.6,749.0 827.6,754.6 828.6,767.6 829.6,758.7 830.6,763.3 831.6,767.6 832.6,775.0 833.6,756.9 834.6,760.1 835.6,763.1 836.6,758.2 837.6,753.3 838.6,756.2 839.6,772.2 840.6,760.6 841.6,754.1 842.6,742.6 843.6,754.4 844.6,774.4 845.6,765.5 846.6,771.5 847.6,759.8 848.6,758.3 849.6,776.7 850.6,770.4 851.6,767.0 852.6,762.5 853.6,760.1 854.6,766.9 855.6,764.4 856.6,781.2 857.6,770.8 858.6,753.6 859.6,774.4 860.6,770.5 861.6,775.7 862.6,773.5 863.6,770.3 864.6,772.5 865.6,765.9 866.6,768.1 867.6,764.3 868.6,776.7 869.6,768.5 870.6,769.1 871.6,772.3 872.6,766.5 873.6,770.6 874.6,774.4 875.6,767.0 876.6,760.7 877.6,747.4 878.6,764.4 879.6,763.1 880.6,790.7 881.6,767.9 882.6,753.6 883.6,750.8 884.6,755.2 885.6,749.7 886.6,768.0 887.6,756.0 888.6,788.5 889.6,762.5 890.6,784.2 891.6,762.7 892.6,784.2 893.6,758.4 894.6,769.6 895.6,749.6 896.6,768.3 897.6,767.5 898.6,760.9 899.6,790.7 900.6,771.6 901.6,783.8 902.6,759.4 903.6,747.4 904.6,771.4 905.6,780.9 906.6,787.8 907.6,739.1 908.6,761.9 909.6,762.6 910.6,777.7 911.6,774.0 912.6,762.9 913.6,773.8 914.6,775.6 915.6,773.3 916.6,780.5 917.6,730.8 918.6,749.3 919.6,768.2 920.6,741.0 921.6,751.2 922.6,774.4 923.7,793.6 924.7,773.9 925.7,761.7 926.7,747.8 927.7,757.4 928.7,766.1 929.7,764.8 930.7,775.3 931.7,790.3 932.7,779.7 933.7,749.7 934.7,774.6 935.7,778.0 936.7,778.5 937.7,778.5 938.7,783.4 939.7,781.9 940.7,792.3 941.7,769.4 942.7,769.0 943.7,779.6 944.7,774.7 945.7,751.5 946.7,783.0 947.7,749.1 948.7,771.1 949.7,771.8 950.7,770.5 951.7,774.3 952.7,776.4 953.7,780.9 954.7,773.9 955.7,763.8 956.7,782.8 957.7,775.4 958.7,785.9 959.7,790.0 960.7,781.9 961.7,762.6 962.7,757.0 963.7,766.5 964.7,774.6 965.7,772.7 966.7,758.9 967.7,762.8 968.7,758.5 969.7,771.4 970.7,758.3 971.7,774.7 972.7,762.9 973.7,760.3 974.7,743.7 975.7,775.7 976.7,784.2 977.7,770.9 978.7,781.1 979.7,770.7 980.7,777.5 981.7,779.0 982.7,772.1 983.7,768.6 984.7,771.5 985.7,784.6 986.7,750.9 987.7,752.3 988.7,759.2 989.7,783.4 990.7,760.9 991.7,784.4 992.7,793.6 993.7,771.7 994.7,779.8 995.7,776.5 996.7,760.7 997.7,758.0 998.7,745.8 999.7,775.2 1000.7,790.2 1001.7,762.3 1002.7,762.5 1003.7,774.2 1004.7,781.9 1005.7,774.1 1006.7,748.5 1007.7,754.8 1008.7,752.3 1009.7,746.3 1010.7,777.8 1011.7,783.5 1012.7,789.4 1013.7,776.8 1014.7,784.4 1015.7,787.7 1016.7,784.5 1017.7,770.7 1018.7,764.0 1019.7,764.1 1020.7,777.2 1021.8,739.8 1022.8,770.8 1023.8,769.4 1024.8,764.7 1025.8,766.4 1026.8,770.8 1027.8,766.3 1028.8,752.6 1029.8,772.1 1030.8,772.2 1031.8,758.4 1032.8,755.7 1033.8,753.0 1034.8,762.9 1035.8,779.2 1036.8,783.3 1037.8,785.8 1038.8,772.9 1039.8,749.4 1040.8,765.0 1041.8,763.4 1042.8,767.6 1043.8,784.0 1044.8,766.7 1045.8,771.8 1046.8,763.0 1047.8,761.1 1048.8,750.0 1049.8,759.1 1050.8,750.3 1051.8,780.5 1052.8,777.0 1053.8,746.7 1054.8,771.8 1055.8,733.3 1056.8,758.4 1057.8,772.1 1058.8,775.3 1059.8,792.4 1060.8,779.9 1061.8,785.0 1062.8,753.1 1063.8,761.1 1064.8,763.7 1065.8,793.6 1066.8,768.6 1067.8,788.4 1068.8,769.3 1069.8,780.5 1070.8,775.8 1070.8,960" fill="none" stroke="#5ed3ea" stroke-width="1.3"/>
<polyline points="293.5,830 295,815 296.5,830" fill="none" stroke="rgba(240,160,70,0.75)" stroke-width="1.3"/>
<polyline points="352.5,830 354,821 355.5,830" fill="none" stroke="rgba(240,160,70,0.75)" stroke-width="1.3"/>
<polyline points="510.5,830 512,823 513.5,830" fill="none" stroke="rgba(240,160,70,0.75)" stroke-width="1.3"/>
<polyline points="758.5,830 760,824 761.5,830" fill="none" stroke="rgba(240,160,70,0.75)" stroke-width="1.3"/>
<polyline points="953.5,830 955,823 956.5,830" fill="none" stroke="rgba(240,160,70,0.75)" stroke-width="1.3"/>
<polyline points="987.5,830 989,818 990.5,830" fill="none" stroke="rgba(240,160,70,0.75)" stroke-width="1.3"/>
<line x1="269" y1="746.6" x2="1086" y2="746.6" stroke="#ef2f3c" stroke-width="1.4"/>
<circle cx="269.5" cy="746.5" r="4" fill="#fff" stroke="#ef2f3c" stroke-width="1.6"/>
<text x="275" y="743" font-size="9.5" class="pct" fill="#333"><tspan class="j">受信</tspan> 95<tspan class="j">パーセンタイル</tspan></text>
<text x="634" y="830" font-size="9.5" class="pct" fill="#333"><tspan class="j">送信</tspan> 95<tspan class="j">パーセンタイル</tspan></text>
<text transform="translate(241.5,806) rotate(-90)" text-anchor="middle" font-size="9" font-weight="bold" class="yt" fill="#666"><tspan class="j">トラフィック</tspan> ( KB )</text>
</svg>
<div class="legend" style="left:1105px;top:688px"><div class="sq" style="top:0;background:#00bfdf"></div><div class="lb" style="top:1.5px">IN</div></div>
<div class="legend" style="left:1105px;top:711px"><div class="sq" style="top:0;background:#f9a13a"></div><div class="lb" style="top:1.5px">OUT</div></div>
</body>
</html>
